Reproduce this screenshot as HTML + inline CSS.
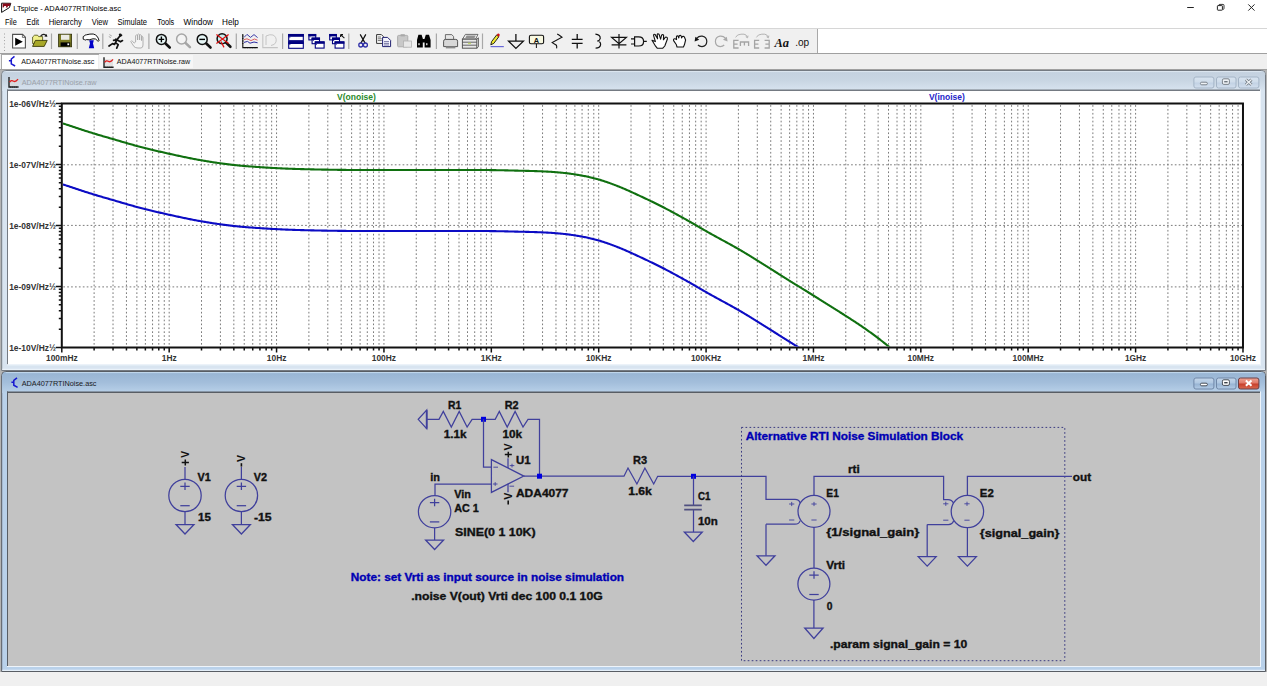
<!DOCTYPE html>
<html><head><meta charset="utf-8"><style>
html,body{margin:0;padding:0;background:#fff;overflow:hidden;width:1267px;height:686px;}
svg{display:block;font-family:"Liberation Sans", sans-serif;}
</style></head><body>
<svg width="1267" height="686" viewBox="0 0 1267 686">
<rect x="0" y="0" width="1267" height="28" fill="#ffffff" />
<rect x="0" y="28" width="1267" height="1" fill="#d6d6d6" />
<rect x="0" y="29" width="818" height="24" fill="#f0f0f0" />
<rect x="818" y="29" width="449" height="24" fill="#ffffff" />
<rect x="817" y="29" width="1" height="24" fill="#a8a8a8" />
<rect x="0" y="53" width="1267" height="1" fill="#a0a0a0" />
<rect x="0" y="54" width="1267" height="15" fill="#efefef" />
<rect x="0" y="69" width="1267" height="1" fill="#a0a0a0" />
<rect x="0" y="70" width="1267" height="602" fill="#b4b4b4" />
<rect x="0" y="672" width="1267" height="14" fill="#f0f0f0" />
<text x="13.3" y="11.4" font-size="7.6" font-weight="normal" fill="#000" text-anchor="start" textLength="107.7" lengthAdjust="spacingAndGlyphs" >LTspice - ADA4077RTINoise.asc</text>
<text x="5" y="24.6" font-size="8.4" font-weight="normal" fill="#000" text-anchor="start" textLength="11.8" lengthAdjust="spacingAndGlyphs" >File</text>
<text x="26.6" y="24.6" font-size="8.4" font-weight="normal" fill="#000" text-anchor="start" textLength="12.4" lengthAdjust="spacingAndGlyphs" >Edit</text>
<text x="48.7" y="24.6" font-size="8.4" font-weight="normal" fill="#000" text-anchor="start" textLength="33.2" lengthAdjust="spacingAndGlyphs" >Hierarchy</text>
<text x="91.8" y="24.6" font-size="8.4" font-weight="normal" fill="#000" text-anchor="start" textLength="16.2" lengthAdjust="spacingAndGlyphs" >View</text>
<text x="117.4" y="24.6" font-size="8.4" font-weight="normal" fill="#000" text-anchor="start" textLength="29.6" lengthAdjust="spacingAndGlyphs" >Simulate</text>
<text x="157.3" y="24.6" font-size="8.4" font-weight="normal" fill="#000" text-anchor="start" textLength="16.9" lengthAdjust="spacingAndGlyphs" >Tools</text>
<text x="183.5" y="24.6" font-size="8.4" font-weight="normal" fill="#000" text-anchor="start" textLength="29.5" lengthAdjust="spacingAndGlyphs" >Window</text>
<text x="222" y="24.6" font-size="8.4" font-weight="normal" fill="#000" text-anchor="start" textLength="16.8" lengthAdjust="spacingAndGlyphs" >Help</text>
<line x1="1187.2" y1="7.5" x2="1193.8" y2="7.5" stroke="#222" stroke-width="1" />
<rect x="1217.4" y="5.6" width="5" height="4.6" rx="0.6" fill="none" stroke="#222" stroke-width="1"/>
<path d="M1218.6 5.4 Q1218.8 4.4 1219.8 4.4 H1223 Q1224 4.4 1224 5.4 V8.4 Q1224 9.4 1222.8 9.6" fill="none" stroke="#222" stroke-width="0.9"/>
<path d="M1248.3 4.4 L1254.5 10.6 M1254.5 4.4 L1248.3 10.6" stroke="#222" stroke-width="1"/>
<line x1="4.5" y1="33.5" x2="4.5" y2="51" stroke="#a0a0a0" stroke-width="1" stroke-dasharray="1 2.3"/>
<line x1="51.5" y1="33.5" x2="51.5" y2="49" stroke="#a8a8a8" stroke-width="1.2"/>
<line x1="77.3" y1="33.5" x2="77.3" y2="49" stroke="#a8a8a8" stroke-width="1.2"/>
<line x1="102.8" y1="33.5" x2="102.8" y2="49" stroke="#a8a8a8" stroke-width="1.2"/>
<line x1="148.9" y1="33.5" x2="148.9" y2="49" stroke="#a8a8a8" stroke-width="1.2"/>
<line x1="236.3" y1="33.5" x2="236.3" y2="49" stroke="#a8a8a8" stroke-width="1.2"/>
<line x1="282.6" y1="33.5" x2="282.6" y2="49" stroke="#a8a8a8" stroke-width="1.2"/>
<line x1="348.8" y1="33.5" x2="348.8" y2="49" stroke="#a8a8a8" stroke-width="1.2"/>
<line x1="436.4" y1="33.5" x2="436.4" y2="49" stroke="#a8a8a8" stroke-width="1.2"/>
<line x1="482.5" y1="33.5" x2="482.5" y2="49" stroke="#a8a8a8" stroke-width="1.2"/>
<path d="M12.6 34.4 H22.6 L25.4 37.2 V48 H12.6 Z" fill="#fff" stroke="#505050" stroke-width="1.1"/>
<path d="M22.4 34.4 V37.4 H25.4" fill="none" stroke="#505050" stroke-width="0.8"/>
<path d="M15.2 37.8 L22.8 41.8 L15.2 45.8 Z" fill="#000"/>
<path d="M32.6 37 L34.6 35.2 H37.6 L38.6 36.6 H42.6 V43.5 H32.6 Z" fill="#f0f08a" stroke="#4a4a10" stroke-width="0.8"/>
<path d="M32.6 46.4 L35.4 40.4 H47.2 L44.2 46.4 Z" fill="#a8a828" stroke="#3a3a08" stroke-width="0.9"/>
<path d="M40.6 36.2 Q43.5 32.8 46.2 35.6" fill="none" stroke="#222" stroke-width="1.1"/>
<path d="M44.4 36.6 L47.4 36.8 L46.6 33.9 Z" fill="#111"/>
<rect x="58.6" y="34.2" width="13" height="12.6" fill="#7a7a22" stroke="#2f2f08" stroke-width="0.8"/>
<rect x="61" y="34.8" width="8.4" height="5" fill="#ecece4"/>
<rect x="60.6" y="42.4" width="9.6" height="4" fill="#000"/>
<rect x="67.4" y="43.4" width="1.8" height="1.8" fill="#fff"/>
<path d="M83.2 36.6 L84.6 35.8 Q85 34.6 86.4 34.8 Q90 33.8 93.2 34 Q97.8 35 99 40.6 Q98.6 41.8 97.6 40.8 Q95.8 38.2 93 38.8 L89.2 39.8 L86.4 39.6 Q85 40.6 84.4 39.6 L83.2 39.2 Z" fill="#fff" stroke="#111" stroke-width="1"/>
<path d="M89.2 40.2 H93.8 L93 43.4 L94.2 48.2 H88.8 L90 43.4 Z" fill="#0000c8"/>
<path d="M109 46 L112.5 43.6 L114.6 44.4 L117 39.6 L113.6 40.4 M117 39.6 L119.5 36.5 L121.5 35.3 M117 39.6 L115.4 42.6 L118.2 44.6 L116.7 48.2 M115.8 39.2 L120.5 41.8 L122.5 40.6" fill="none" stroke="#111" stroke-width="1.7" stroke-linecap="round" stroke-linejoin="round"/>
<circle cx="120.2" cy="34.8" r="1.4" fill="#111"/>
<path d="M109.4 34.6 L111.8 36 M108.8 36.6 L111 37.6" stroke="#777" stroke-width="0.6"/>
<path d="M132.6 41.5 Q131.5 40 130.8 41.6 L134 46.6 Q135.5 48 138 48 H141 Q143 47.8 143 45 V37.6 Q142.8 36.2 141.8 36.6 L141.6 40.6 V35.6 Q140.6 34 139.6 35.4 V40 V34.6 Q138.6 33.4 137.6 34.6 V40 V35.4 Q136.6 34.4 135.6 35.6 V42 L134.2 43 Z" fill="#f4f4f4" stroke="#a8a8a8" stroke-width="0.9"/>
<line x1="165.0" y1="43.0" x2="169.70000000000002" y2="47.5" stroke="#111" stroke-width="2.6" stroke-linecap="round"/>
<circle cx="161.4" cy="39.4" r="5" fill="#e6f6f6" stroke="#111" stroke-width="1.5"/>
<path d="M158.6 39.4 H164.2 M161.4 36.6 V42.2" stroke="#000" stroke-width="1.4"/>
<line x1="185.2" y1="42.6" x2="189.9" y2="47.1" stroke="#a6a6a6" stroke-width="2.6" stroke-linecap="round"/>
<circle cx="181.6" cy="39" r="5" fill="#f4f4f4" stroke="#a6a6a6" stroke-width="1.5"/>
<line x1="205.79999999999998" y1="43.0" x2="210.5" y2="47.5" stroke="#111" stroke-width="2.6" stroke-linecap="round"/>
<circle cx="202.2" cy="39.4" r="5" fill="#e6f6f6" stroke="#111" stroke-width="1.5"/>
<path d="M199.4 39.4 H205" stroke="#000" stroke-width="1.4"/>
<line x1="225.7" y1="42.300000000000004" x2="230.4" y2="46.800000000000004" stroke="#111" stroke-width="2.6" stroke-linecap="round"/>
<circle cx="222.1" cy="38.7" r="5" fill="#c8f0f0" stroke="#111" stroke-width="1.5"/>
<path d="M216.4 34.4 L228.6 43.6 M216.4 43.6 L228.6 34.4 M221 41.6 L224 47.4" stroke="#e01010" stroke-width="1.2"/>
<path d="M242.8 34 V47.6 H257.8" fill="none" stroke="#111" stroke-width="1.1"/>
<path d="M242.2 36 H243.4 M242.2 38.5 H243.4 M242.2 41 H243.4 M242.2 43.5 H243.4 M245 47 V48.2 M247.5 47 V48.2 M250 47 V48.2 M252.5 47 V48.2 M255 47 V48.2" stroke="#111" stroke-width="0.9"/>
<path d="M244 37.4 L247 34.4 L250.5 37.4 L254 34.6 L257.6 37.6" fill="none" stroke="#2a2aa0" stroke-width="0.9"/>
<path d="M244 39.6 L247 38.8 L251 40.6 L254.5 39 L257.5 40.2" fill="none" stroke="#e06060" stroke-width="1"/>
<path d="M244 42.4 L247.5 41.4 L250 43.2 L254 42 L257.6 42.8" fill="none" stroke="#2a2aa0" stroke-width="1"/>
<path d="M262.8 34 V47.6 H277.8" fill="none" stroke="#c4c4c4" stroke-width="1.1"/>
<path d="M266 36 Q270 34 273 35 Q277 37 276 42 Q275 45 271 45.5 M266 36 V45" fill="none" stroke="#c0c0c0" stroke-width="0.9"/>
<rect x="288.7" y="34.5" width="14.6" height="6.2" fill="#fff" stroke="#000080" stroke-width="1.1"/>
<rect x="288.2" y="34" width="15.6" height="2.8" fill="#000080"/>
<rect x="289.4" y="36.8" width="0.9" height="0.9" fill="#000080"/>
<rect x="288.7" y="41.7" width="14.6" height="6.6" fill="#fff" stroke="#000080" stroke-width="1.1"/>
<rect x="288.2" y="41.2" width="15.6" height="2.8" fill="#000080"/>
<rect x="289.4" y="44.0" width="0.9" height="0.9" fill="#000080"/>
<rect x="308.9" y="34.5" width="6.8" height="5.4" fill="#fff" stroke="#000080" stroke-width="1.1"/>
<rect x="308.4" y="34" width="7.8" height="2.4" fill="#000080"/>
<rect x="309.59999999999997" y="36.4" width="0.9" height="0.9" fill="#000080"/>
<rect x="312.1" y="38.1" width="7.4" height="5.6" fill="#fff" stroke="#000080" stroke-width="1.1"/>
<rect x="311.6" y="37.6" width="8.4" height="2.4" fill="#000080"/>
<rect x="312.8" y="40.0" width="0.9" height="0.9" fill="#000080"/>
<rect x="315.3" y="41.9" width="8.8" height="6.2" fill="#fff" stroke="#000080" stroke-width="1.1"/>
<rect x="314.8" y="41.4" width="9.8" height="2.4" fill="#000080"/>
<rect x="316.0" y="43.8" width="0.9" height="0.9" fill="#000080"/>
<rect x="329.7" y="34.5" width="6.6" height="5.4" fill="#fff" stroke="#000080" stroke-width="1.1"/>
<rect x="329.2" y="34" width="7.6" height="2.4" fill="#000080"/>
<rect x="330.4" y="36.4" width="0.9" height="0.9" fill="#000080"/>
<rect x="332.5" y="38.1" width="7" height="5.6" fill="#fff" stroke="#000080" stroke-width="1.1"/>
<rect x="332" y="37.6" width="8" height="2.4" fill="#000080"/>
<rect x="333.2" y="40.0" width="0.9" height="0.9" fill="#000080"/>
<rect x="335.1" y="41.9" width="8.8" height="6.2" fill="#fff" stroke="#000080" stroke-width="1.1"/>
<rect x="334.6" y="41.4" width="9.8" height="2.4" fill="#000080"/>
<rect x="335.8" y="43.8" width="0.9" height="0.9" fill="#000080"/>
<path d="M340.6 34.6 L344.4 38.2 M340.6 34.6 V37 M340.6 34.6 H343" stroke="#111" stroke-width="1.1" fill="none"/>
<path d="M360.2 34.4 L365.2 43.4 M365.8 34.4 L360.8 43.4" stroke="#111" stroke-width="1.2"/>
<circle cx="360.8" cy="45" r="2" fill="none" stroke="#3030a8" stroke-width="1.3"/>
<circle cx="365.4" cy="45" r="2" fill="none" stroke="#3030a8" stroke-width="1.3"/>
<path d="M376.6 34.6 H381.4 L383.4 36.6 V43.4 H376.6 Z" fill="#fff" stroke="#333" stroke-width="1"/>
<path d="M377.8 37 H381 M377.8 38.8 H381.8 M377.8 40.6 H381.8" stroke="#333" stroke-width="0.7"/>
<path d="M382.6 37.4 H387.6 L390.6 40.4 V46.6 H382.6 Z" fill="#f4f4ff" stroke="#222270" stroke-width="1"/>
<path d="M384 41.6 H389 M384 43.4 H389 M384 45 H389" stroke="#444480" stroke-width="0.7"/>
<rect x="397.6" y="35.4" width="10.2" height="11.4" rx="1" fill="#c8c8c8" stroke="#a8a8a8" stroke-width="0.9"/>
<rect x="400.6" y="34.2" width="4.2" height="2.2" fill="#a8a8a8"/>
<rect x="403.4" y="41" width="8" height="6.2" fill="#e8e8e8" stroke="#b0b0b0" stroke-width="0.8"/>
<path d="M418.4 34.8 H421.6 L422.8 38.6 V47.6 H417 V40 Z M424.6 38.6 L425.8 34.8 H429 L430.6 40 V47.6 H424.6 Z M422.8 39 H424.6 V42.5 H422.8 Z" fill="#000"/>
<rect x="418.4" y="43.2" width="1.2" height="2" fill="#fff"/><rect x="426.2" y="43.2" width="1.2" height="2" fill="#fff"/>
<path d="M445.4 34.6 H451.8 L453.6 36.6 V39.6 H445.4 Z" fill="#e6e6e6" stroke="#606060" stroke-width="0.9"/>
<path d="M443.6 41.2 Q443.6 39.4 445.4 39.4 H455.8 Q457.6 39.4 457.6 41.2 V46.6 H443.6 Z" fill="#d8d8d8" stroke="#555" stroke-width="1"/>
<rect x="445.8" y="46.4" width="9.6" height="2" fill="#8a8a8a"/>
<path d="M465.4 34.4 H478 L475.6 39 H462.6 Z" fill="#f0f0f0" stroke="#606060" stroke-width="0.9"/>
<path d="M466.6 35.6 H475.8 L474.4 38.2 H465.2 Z" fill="#909090"/>
<rect x="462.4" y="39.2" width="14.4" height="9" fill="#e8e8e8" stroke="#555" stroke-width="1"/>
<path d="M462.4 42.2 H476.8 M462.4 45.2 H476.8 M476.8 39.2 L478.4 37.8 V46.8 L476.8 48.2" fill="none" stroke="#555" stroke-width="0.9"/>
<rect x="468" y="42.8" width="3" height="1.2" fill="#c8e070"/>
<path d="M490.8 44.8 L491.6 41.6 L496.6 35 L498.8 36.8 L493.8 43.4 Z" fill="#f0e830" stroke="#111" stroke-width="0.9"/>
<path d="M496.6 35 L497.6 33.8 Q498.8 33.2 499.6 34.2 Q500 35.2 499.2 36.2 L498.8 36.8 Z" fill="#d01010"/>
<path d="M490.6 46.6 H503.8" stroke="#6868d8" stroke-width="1.2"/>
<path d="M515.9 34 V41.1 M508.6 41.1 H523.4 L515.9 48.4 Z" fill="none" stroke="#111" stroke-width="1.3" stroke-linejoin="miter"/>
<rect x="529.4" y="35.2" width="14.2" height="8.6" rx="1.6" fill="#f8f8e0" stroke="#111" stroke-width="1.1"/>
<text x="536.5" y="42.6" font-size="7.4" font-weight="bold" fill="#111" text-anchor="middle">A</text>
<path d="M536.4 43.8 V48" stroke="#111" stroke-width="1"/>
<path d="M557.2 34 Q558.4 34.6 562 37.2 L552.2 42.6 L556.4 45.2 Q557 46.4 556.6 48.4" fill="none" stroke="#111" stroke-width="1.1"/>
<path d="M577.2 34 V39.4 M571.8 39.4 H582.6 M571.8 43.4 H582.6 M577.2 43.4 V48.4" stroke="#111" stroke-width="1.3"/>
<path d="M595.4 34.2 Q600.6 34.6 600.2 38.6 Q599.6 40.8 597.2 41 Q600.8 41.4 600.6 44.6 Q600.2 48.2 595.6 48.2" fill="none" stroke="#111" stroke-width="1.2"/>
<path d="M619 34 V48.4 M611.6 37.4 H626.4 L619 43.8 Z M611.6 44.8 H626.4" fill="none" stroke="#111" stroke-width="1.2"/>
<path d="M634.6 36.8 H638.6 Q643.6 36.8 643.6 41.4 Q643.6 46 638.6 46 H634.6 Z M631 38.8 H634.6 M631 44 H634.6 M643.6 41.4 H646.8" fill="none" stroke="#111" stroke-width="1.2"/>
<path d="M652 40.2 L655.4 41.6 L653.6 35.6 Q653.4 33.8 655 34.4 L657.6 38.8 L657.2 34.6 Q657.6 33.4 659 34.2 L660.6 39.2 L661.6 35.2 Q662.6 34 663.6 35.2 L663.4 39.8 L665.4 37.2 Q667.6 36.8 667.4 39 L664.8 46 L662.8 48.2 H657.2 L655.6 46.2 Z" fill="#fff" stroke="#111" stroke-width="1.1" stroke-linejoin="round"/>
<path d="M673.6 40.6 Q673.2 38.6 675 38.8 L676.6 39.6 L676.4 37 Q676.6 35.6 678 36 L678.8 38 L679.2 35.8 Q680.4 35 681.2 36 L681.6 38 L682.4 36.6 Q683.6 36 684.4 37 L685.6 40 L684.4 44.8 L683.4 47 H677 L676.4 44.8 Z" fill="#fff" stroke="#111" stroke-width="1.1" stroke-linejoin="round"/>
<path d="M696.6 38.4 Q699 35.8 702.2 36.2 Q706.8 37 706.8 41.6 Q706.6 46.4 702 46.6 Q699.4 46.6 698 45" fill="none" stroke="#222" stroke-width="1.2"/>
<path d="M694.6 41.6 L695.4 36.8 L699.2 39.8 Z" fill="#111"/>
<path d="M725.6 38.4 Q723.2 35.8 720 36.2 Q715.4 37 715.4 41.6 Q715.6 46.4 720.2 46.6 Q722.8 46.6 724.2 45" fill="none" stroke="#a8a8a8" stroke-width="1.2"/>
<path d="M727.6 41.6 L726.8 36.8 L723 39.8 Z" fill="#a8a8a8"/>
<path d="M738.6 40.4 H733.8 V48 H738.6 M733.8 44.2 H737.6" fill="none" stroke="#a4a4a4" stroke-width="1.3"/>
<path d="M740.4 46 V42 H748.6 V46 M744.4 42 V45.4" fill="none" stroke="#a4a4a4" stroke-width="1.3"/>
<path d="M735.6 37.4 Q737 34.2 741 34.2 H744 Q746.4 34.4 747.2 37" fill="none" stroke="#a4a4a4" stroke-width="0.8"/>
<path d="M745.8 36.8 L747.6 37.8 L748 35.6" fill="none" stroke="#a4a4a4" stroke-width="0.8"/>
<path d="M759.2 40.4 H754.6 V48 H759.2 M754.6 44.2 H758.4" fill="none" stroke="#a4a4a4" stroke-width="1.3"/>
<path d="M764.6 40.4 H769.2 V48 H764.6 M769.2 44.2 H765.4" fill="none" stroke="#a4a4a4" stroke-width="1.3"/>
<path d="M756.4 37.4 Q757.8 34.2 761.8 34.2 H764.8 Q767.2 34.4 768 37" fill="none" stroke="#a4a4a4" stroke-width="0.8"/>
<path d="M766.6 36.8 L768.4 37.8 L768.8 35.6" fill="none" stroke="#a4a4a4" stroke-width="0.8"/>
<text x="774.4" y="46.8" font-family="Liberation Serif, serif" font-size="12.4" font-weight="bold" font-style="italic" fill="#111" textLength="14.6" lengthAdjust="spacingAndGlyphs">Aa</text>
<text x="795.2" y="45.6" font-family="Liberation Sans, sans-serif" font-size="11" fill="#111" textLength="14" lengthAdjust="spacingAndGlyphs">.op</text>
<path d="M1.6 3.2 V12.4 L9.4 7.6 L10.8 3.3 Z" fill="#fff" stroke="#111" stroke-width="1"/>
<path d="M2.6 3.6 H10.6 L9.8 6 H8 L7.4 7.4 H5.8 L6.2 6 H4.4 L3.6 7.4 H2.6 Z" fill="#8a0a1a"/>
<rect x="2" y="55" width="96" height="14" fill="#ffffff" />
<rect x="1" y="54" width="98" height="15" fill="#a8a8a8" />
<rect x="2" y="55" width="96.8" height="14" fill="#ffffff" />
<rect x="99.1" y="55" width="94" height="13" fill="#f6f6f6" />
<path d="M14.5 56.400000000000006 L11.3 59.0 V63.800000000000004 L15.100000000000001 66.0 M8.9 60.800000000000004 H11.3" fill="none" stroke="#1818d0" stroke-width="1.5"/>
<rect x="104" y="59.2" width="9" height="7" fill="#d8d8d8" opacity="0.7"/>
<path d="M104 57.2 V67.2 H113.6" fill="none" stroke="#222" stroke-width="1.4"/>
<path d="M105.4 67.8 V66.8 M107.4 67.8 V66.8 M109.4 67.8 V66.8 M111.4 67.8 V66.8" stroke="#222" stroke-width="1"/>
<path d="M104.6 62.400000000000006 Q106.5 59.800000000000004 108.5 61.400000000000006 Q110.6 62.6 113 59.400000000000006" fill="none" stroke="#e02020" stroke-width="1.3"/>
<text x="21.3" y="63.9" font-size="7.9" font-weight="normal" fill="#111" text-anchor="start" textLength="73.1" lengthAdjust="spacingAndGlyphs" >ADA4077RTINoise.asc</text>
<text x="116.8" y="63.9" font-size="7.9" font-weight="normal" fill="#111" text-anchor="start" textLength="73.4" lengthAdjust="spacingAndGlyphs" >ADA4077RTINoise.raw</text>
<defs><linearGradient id="g70" x1="0" y1="0" x2="0" y2="1"><stop offset="0" stop-color="#c4d1df"/><stop offset="0.5" stop-color="#c9d6e3"/><stop offset="1" stop-color="#d8e4f0"/></linearGradient></defs>
<path d="M1.7 370.5 V74.5 Q1.7 70.5 5.7 70.5 H1261.5 Q1265.5 70.5 1265.5 74.5 V370.5 Z" fill="#d8e4f0" stroke="#747a82" stroke-width="1"/>
<path d="M2.2 91 V74.5 Q2.2 71 5.7 71 H1261.5 Q1265 71 1265 74.5 V91 Z" fill="url(#g70)"/>
<path d="M5.7 71.6 H1261.5" stroke="#dde7f1" stroke-width="1"/>
<rect x="2.2" y="368.8" width="1262.8" height="1" fill="#eef6fc" />
<rect x="7" y="90" width="1253" height="274.4" fill="#ffffff" />
<rect x="7" y="89.5" width="1253" height="1.5" fill="#747a82" />
<rect x="7" y="89.5" width="1" height="274.9" fill="#747a82" />
<rect x="7" y="364.4" width="1254" height="1" fill="#eef4fa" />
<rect x="1260" y="89.5" width="1" height="275.9" fill="#eef4fa" />
<text x="21.7" y="85.4" font-size="7.9" font-weight="normal" fill="#9aa0a8" text-anchor="start" textLength="74.8" lengthAdjust="spacingAndGlyphs" >ADA4077RTINoise.raw</text>
<rect x="9" y="79" width="9" height="7" fill="#d8d8d8" opacity="0.7"/>
<path d="M9 77 V87 H18.6" fill="none" stroke="#222" stroke-width="1.4"/>
<path d="M10.4 87.6 V86.6 M12.4 87.6 V86.6 M14.4 87.6 V86.6 M16.4 87.6 V86.6" stroke="#222" stroke-width="1"/>
<path d="M9.6 82.2 Q11.5 79.6 13.5 81.2 Q15.6 82.4 18 79.2" fill="none" stroke="#e02020" stroke-width="1.3"/>
<defs><linearGradient id="b700" x1="0" y1="0" x2="0" y2="1"><stop offset="0" stop-color="#d8e4f0"/><stop offset="0.45" stop-color="#cfdcea"/><stop offset="0.55" stop-color="#c2d2e4"/><stop offset="1" stop-color="#d4e0ee"/></linearGradient></defs>
<rect x="1193.9" y="77.0" width="20.0" height="11.0" rx="2" fill="url(#b700)" stroke="#a4b4c6" stroke-width="1"/>
<defs><linearGradient id="b701" x1="0" y1="0" x2="0" y2="1"><stop offset="0" stop-color="#d8e4f0"/><stop offset="0.45" stop-color="#cfdcea"/><stop offset="0.55" stop-color="#c2d2e4"/><stop offset="1" stop-color="#d4e0ee"/></linearGradient></defs>
<rect x="1216.5" y="77.0" width="19.5" height="11.0" rx="2" fill="url(#b701)" stroke="#a4b4c6" stroke-width="1"/>
<defs><linearGradient id="b702" x1="0" y1="0" x2="0" y2="1"><stop offset="0" stop-color="#d8e4f0"/><stop offset="0.45" stop-color="#cfdcea"/><stop offset="0.55" stop-color="#c2d2e4"/><stop offset="1" stop-color="#d4e0ee"/></linearGradient></defs>
<rect x="1238.5" y="77.0" width="20.40000000000009" height="11.0" rx="2" fill="url(#b702)" stroke="#a4b4c6" stroke-width="1"/>
<rect x="1200.4" y="82.2" width="7" height="2.6" rx="1.3" fill="#eef2f6" stroke="#707880" stroke-width="0.9"/>
<rect x="1222.4" y="78.8" width="7" height="5.6" rx="1.4" fill="#eef2f6" stroke="#707880" stroke-width="0.9"/>
<rect x="1224.2" y="81" width="3.4" height="1.4" fill="#707880"/>
<path d="M1245.9 79.60000000000001 L1251.5 84.8 M1251.5 79.60000000000001 L1245.9 84.8" stroke="#707880" stroke-width="2.8"/>
<path d="M1245.9 79.60000000000001 L1251.5 84.8 M1251.5 79.60000000000001 L1245.9 84.8" stroke="#eef2f6" stroke-width="1.3"/>
<defs><linearGradient id="g371" x1="0" y1="0" x2="0" y2="1"><stop offset="0" stop-color="#97b4d3"/><stop offset="0.5" stop-color="#a3bedb"/><stop offset="1" stop-color="#b9d1e9"/></linearGradient></defs>
<path d="M1.7 671.5 V375.5 Q1.7 371.5 5.7 371.5 H1261.5 Q1265.5 371.5 1265.5 375.5 V671.5 Z" fill="#b9d1ea" stroke="#585d64" stroke-width="1"/>
<path d="M2.2 393 V375.5 Q2.2 372 5.7 372 H1261.5 Q1265 372 1265 375.5 V393 Z" fill="url(#g371)"/>
<path d="M5.7 372.6 H1261.5" stroke="#c4daee" stroke-width="1"/>
<rect x="2.2" y="669.8" width="1262.8" height="1" fill="#eef6fc" />
<rect x="7" y="392" width="1253" height="274" fill="#c3c3c3" />
<rect x="7" y="391.5" width="1253" height="1.5" fill="#585d64" />
<rect x="7" y="391.5" width="1" height="274.5" fill="#585d64" />
<rect x="7" y="666" width="1254" height="1" fill="#eef4fa" />
<rect x="1260" y="391.5" width="1" height="275.5" fill="#eef4fa" />
<text x="21.7" y="386.4" font-size="7.9" font-weight="normal" fill="#1a1a1a" text-anchor="start" textLength="74.8" lengthAdjust="spacingAndGlyphs" >ADA4077RTINoise.asc</text>
<path d="M17.0 377.8 L13.8 380.40000000000003 V385.20000000000005 L17.6 387.40000000000003 M11.4 382.20000000000005 H13.8" fill="none" stroke="#1818d0" stroke-width="1.5"/>
<defs><linearGradient id="b3710" x1="0" y1="0" x2="0" y2="1"><stop offset="0" stop-color="#c4d6ea"/><stop offset="0.45" stop-color="#b0c8e2"/><stop offset="0.55" stop-color="#98b4d4"/><stop offset="1" stop-color="#b4cce6"/></linearGradient></defs>
<rect x="1193.9" y="378.0" width="20.0" height="11.0" rx="2" fill="url(#b3710)" stroke="#7088a8" stroke-width="1"/>
<defs><linearGradient id="b3711" x1="0" y1="0" x2="0" y2="1"><stop offset="0" stop-color="#c4d6ea"/><stop offset="0.45" stop-color="#b0c8e2"/><stop offset="0.55" stop-color="#98b4d4"/><stop offset="1" stop-color="#b4cce6"/></linearGradient></defs>
<rect x="1216.5" y="378.0" width="19.5" height="11.0" rx="2" fill="url(#b3711)" stroke="#7088a8" stroke-width="1"/>
<defs><linearGradient id="b3712" x1="0" y1="0" x2="0" y2="1"><stop offset="0" stop-color="#eea494"/><stop offset="0.45" stop-color="#e07868"/><stop offset="0.55" stop-color="#c8402c"/><stop offset="1" stop-color="#d86850"/></linearGradient></defs>
<rect x="1238.5" y="378.0" width="20.40000000000009" height="11.0" rx="2" fill="url(#b3712)" stroke="#6a4048" stroke-width="1"/>
<rect x="1200.4" y="383.2" width="7" height="2.6" rx="1.3" fill="#fff" stroke="#3a4048" stroke-width="0.9"/>
<rect x="1222.4" y="379.8" width="7" height="5.6" rx="1.4" fill="#fff" stroke="#3a4048" stroke-width="0.9"/>
<rect x="1224.2" y="382" width="3.4" height="1.4" fill="#3a4048"/>
<path d="M1245.9 380.59999999999997 L1251.5 385.8 M1251.5 380.59999999999997 L1245.9 385.8" stroke="#fff" stroke-width="2"/>
<line x1="94.12" y1="105.1" x2="94.12" y2="346.5" stroke="#7a7a7a" stroke-width="1" stroke-dasharray="1.7 2.2"/>
<line x1="113.03" y1="105.1" x2="113.03" y2="346.5" stroke="#7a7a7a" stroke-width="1" stroke-dasharray="1.7 2.2"/>
<line x1="126.45" y1="105.1" x2="126.45" y2="346.5" stroke="#7a7a7a" stroke-width="1" stroke-dasharray="1.7 2.2"/>
<line x1="136.86" y1="105.1" x2="136.86" y2="346.5" stroke="#7a7a7a" stroke-width="1" stroke-dasharray="1.7 2.2"/>
<line x1="145.36" y1="105.1" x2="145.36" y2="346.5" stroke="#7a7a7a" stroke-width="1" stroke-dasharray="1.7 2.2"/>
<line x1="152.55" y1="105.1" x2="152.55" y2="346.5" stroke="#7a7a7a" stroke-width="1" stroke-dasharray="1.7 2.2"/>
<line x1="158.77" y1="105.1" x2="158.77" y2="346.5" stroke="#7a7a7a" stroke-width="1" stroke-dasharray="1.7 2.2"/>
<line x1="164.27" y1="105.1" x2="164.27" y2="346.5" stroke="#7a7a7a" stroke-width="1" stroke-dasharray="1.7 2.2"/>
<line x1="169.18" y1="105.1" x2="169.18" y2="346.5" stroke="#7a7a7a" stroke-width="1" stroke-dasharray="1.7 2.2"/>
<line x1="201.50" y1="105.1" x2="201.50" y2="346.5" stroke="#7a7a7a" stroke-width="1" stroke-dasharray="1.7 2.2"/>
<line x1="220.41" y1="105.1" x2="220.41" y2="346.5" stroke="#7a7a7a" stroke-width="1" stroke-dasharray="1.7 2.2"/>
<line x1="233.83" y1="105.1" x2="233.83" y2="346.5" stroke="#7a7a7a" stroke-width="1" stroke-dasharray="1.7 2.2"/>
<line x1="244.24" y1="105.1" x2="244.24" y2="346.5" stroke="#7a7a7a" stroke-width="1" stroke-dasharray="1.7 2.2"/>
<line x1="252.74" y1="105.1" x2="252.74" y2="346.5" stroke="#7a7a7a" stroke-width="1" stroke-dasharray="1.7 2.2"/>
<line x1="259.93" y1="105.1" x2="259.93" y2="346.5" stroke="#7a7a7a" stroke-width="1" stroke-dasharray="1.7 2.2"/>
<line x1="266.15" y1="105.1" x2="266.15" y2="346.5" stroke="#7a7a7a" stroke-width="1" stroke-dasharray="1.7 2.2"/>
<line x1="271.65" y1="105.1" x2="271.65" y2="346.5" stroke="#7a7a7a" stroke-width="1" stroke-dasharray="1.7 2.2"/>
<line x1="276.56" y1="105.1" x2="276.56" y2="346.5" stroke="#7a7a7a" stroke-width="1" stroke-dasharray="1.7 2.2"/>
<line x1="308.88" y1="105.1" x2="308.88" y2="346.5" stroke="#7a7a7a" stroke-width="1" stroke-dasharray="1.7 2.2"/>
<line x1="327.79" y1="105.1" x2="327.79" y2="346.5" stroke="#7a7a7a" stroke-width="1" stroke-dasharray="1.7 2.2"/>
<line x1="341.21" y1="105.1" x2="341.21" y2="346.5" stroke="#7a7a7a" stroke-width="1" stroke-dasharray="1.7 2.2"/>
<line x1="351.62" y1="105.1" x2="351.62" y2="346.5" stroke="#7a7a7a" stroke-width="1" stroke-dasharray="1.7 2.2"/>
<line x1="360.12" y1="105.1" x2="360.12" y2="346.5" stroke="#7a7a7a" stroke-width="1" stroke-dasharray="1.7 2.2"/>
<line x1="367.31" y1="105.1" x2="367.31" y2="346.5" stroke="#7a7a7a" stroke-width="1" stroke-dasharray="1.7 2.2"/>
<line x1="373.53" y1="105.1" x2="373.53" y2="346.5" stroke="#7a7a7a" stroke-width="1" stroke-dasharray="1.7 2.2"/>
<line x1="379.03" y1="105.1" x2="379.03" y2="346.5" stroke="#7a7a7a" stroke-width="1" stroke-dasharray="1.7 2.2"/>
<line x1="383.94" y1="105.1" x2="383.94" y2="346.5" stroke="#7a7a7a" stroke-width="1" stroke-dasharray="1.7 2.2"/>
<line x1="416.26" y1="105.1" x2="416.26" y2="346.5" stroke="#7a7a7a" stroke-width="1" stroke-dasharray="1.7 2.2"/>
<line x1="435.17" y1="105.1" x2="435.17" y2="346.5" stroke="#7a7a7a" stroke-width="1" stroke-dasharray="1.7 2.2"/>
<line x1="448.59" y1="105.1" x2="448.59" y2="346.5" stroke="#7a7a7a" stroke-width="1" stroke-dasharray="1.7 2.2"/>
<line x1="459.00" y1="105.1" x2="459.00" y2="346.5" stroke="#7a7a7a" stroke-width="1" stroke-dasharray="1.7 2.2"/>
<line x1="467.50" y1="105.1" x2="467.50" y2="346.5" stroke="#7a7a7a" stroke-width="1" stroke-dasharray="1.7 2.2"/>
<line x1="474.69" y1="105.1" x2="474.69" y2="346.5" stroke="#7a7a7a" stroke-width="1" stroke-dasharray="1.7 2.2"/>
<line x1="480.91" y1="105.1" x2="480.91" y2="346.5" stroke="#7a7a7a" stroke-width="1" stroke-dasharray="1.7 2.2"/>
<line x1="486.41" y1="105.1" x2="486.41" y2="346.5" stroke="#7a7a7a" stroke-width="1" stroke-dasharray="1.7 2.2"/>
<line x1="491.32" y1="105.1" x2="491.32" y2="346.5" stroke="#7a7a7a" stroke-width="1" stroke-dasharray="1.7 2.2"/>
<line x1="523.64" y1="105.1" x2="523.64" y2="346.5" stroke="#7a7a7a" stroke-width="1" stroke-dasharray="1.7 2.2"/>
<line x1="542.55" y1="105.1" x2="542.55" y2="346.5" stroke="#7a7a7a" stroke-width="1" stroke-dasharray="1.7 2.2"/>
<line x1="555.97" y1="105.1" x2="555.97" y2="346.5" stroke="#7a7a7a" stroke-width="1" stroke-dasharray="1.7 2.2"/>
<line x1="566.38" y1="105.1" x2="566.38" y2="346.5" stroke="#7a7a7a" stroke-width="1" stroke-dasharray="1.7 2.2"/>
<line x1="574.88" y1="105.1" x2="574.88" y2="346.5" stroke="#7a7a7a" stroke-width="1" stroke-dasharray="1.7 2.2"/>
<line x1="582.07" y1="105.1" x2="582.07" y2="346.5" stroke="#7a7a7a" stroke-width="1" stroke-dasharray="1.7 2.2"/>
<line x1="588.29" y1="105.1" x2="588.29" y2="346.5" stroke="#7a7a7a" stroke-width="1" stroke-dasharray="1.7 2.2"/>
<line x1="593.79" y1="105.1" x2="593.79" y2="346.5" stroke="#7a7a7a" stroke-width="1" stroke-dasharray="1.7 2.2"/>
<line x1="598.70" y1="105.1" x2="598.70" y2="346.5" stroke="#7a7a7a" stroke-width="1" stroke-dasharray="1.7 2.2"/>
<line x1="631.02" y1="105.1" x2="631.02" y2="346.5" stroke="#7a7a7a" stroke-width="1" stroke-dasharray="1.7 2.2"/>
<line x1="649.93" y1="105.1" x2="649.93" y2="346.5" stroke="#7a7a7a" stroke-width="1" stroke-dasharray="1.7 2.2"/>
<line x1="663.35" y1="105.1" x2="663.35" y2="346.5" stroke="#7a7a7a" stroke-width="1" stroke-dasharray="1.7 2.2"/>
<line x1="673.76" y1="105.1" x2="673.76" y2="346.5" stroke="#7a7a7a" stroke-width="1" stroke-dasharray="1.7 2.2"/>
<line x1="682.26" y1="105.1" x2="682.26" y2="346.5" stroke="#7a7a7a" stroke-width="1" stroke-dasharray="1.7 2.2"/>
<line x1="689.45" y1="105.1" x2="689.45" y2="346.5" stroke="#7a7a7a" stroke-width="1" stroke-dasharray="1.7 2.2"/>
<line x1="695.67" y1="105.1" x2="695.67" y2="346.5" stroke="#7a7a7a" stroke-width="1" stroke-dasharray="1.7 2.2"/>
<line x1="701.17" y1="105.1" x2="701.17" y2="346.5" stroke="#7a7a7a" stroke-width="1" stroke-dasharray="1.7 2.2"/>
<line x1="706.08" y1="105.1" x2="706.08" y2="346.5" stroke="#7a7a7a" stroke-width="1" stroke-dasharray="1.7 2.2"/>
<line x1="738.40" y1="105.1" x2="738.40" y2="346.5" stroke="#7a7a7a" stroke-width="1" stroke-dasharray="1.7 2.2"/>
<line x1="757.31" y1="105.1" x2="757.31" y2="346.5" stroke="#7a7a7a" stroke-width="1" stroke-dasharray="1.7 2.2"/>
<line x1="770.73" y1="105.1" x2="770.73" y2="346.5" stroke="#7a7a7a" stroke-width="1" stroke-dasharray="1.7 2.2"/>
<line x1="781.14" y1="105.1" x2="781.14" y2="346.5" stroke="#7a7a7a" stroke-width="1" stroke-dasharray="1.7 2.2"/>
<line x1="789.64" y1="105.1" x2="789.64" y2="346.5" stroke="#7a7a7a" stroke-width="1" stroke-dasharray="1.7 2.2"/>
<line x1="796.83" y1="105.1" x2="796.83" y2="346.5" stroke="#7a7a7a" stroke-width="1" stroke-dasharray="1.7 2.2"/>
<line x1="803.05" y1="105.1" x2="803.05" y2="346.5" stroke="#7a7a7a" stroke-width="1" stroke-dasharray="1.7 2.2"/>
<line x1="808.55" y1="105.1" x2="808.55" y2="346.5" stroke="#7a7a7a" stroke-width="1" stroke-dasharray="1.7 2.2"/>
<line x1="813.46" y1="105.1" x2="813.46" y2="346.5" stroke="#7a7a7a" stroke-width="1" stroke-dasharray="1.7 2.2"/>
<line x1="845.78" y1="105.1" x2="845.78" y2="346.5" stroke="#7a7a7a" stroke-width="1" stroke-dasharray="1.7 2.2"/>
<line x1="864.69" y1="105.1" x2="864.69" y2="346.5" stroke="#7a7a7a" stroke-width="1" stroke-dasharray="1.7 2.2"/>
<line x1="878.11" y1="105.1" x2="878.11" y2="346.5" stroke="#7a7a7a" stroke-width="1" stroke-dasharray="1.7 2.2"/>
<line x1="888.52" y1="105.1" x2="888.52" y2="346.5" stroke="#7a7a7a" stroke-width="1" stroke-dasharray="1.7 2.2"/>
<line x1="897.02" y1="105.1" x2="897.02" y2="346.5" stroke="#7a7a7a" stroke-width="1" stroke-dasharray="1.7 2.2"/>
<line x1="904.21" y1="105.1" x2="904.21" y2="346.5" stroke="#7a7a7a" stroke-width="1" stroke-dasharray="1.7 2.2"/>
<line x1="910.43" y1="105.1" x2="910.43" y2="346.5" stroke="#7a7a7a" stroke-width="1" stroke-dasharray="1.7 2.2"/>
<line x1="915.93" y1="105.1" x2="915.93" y2="346.5" stroke="#7a7a7a" stroke-width="1" stroke-dasharray="1.7 2.2"/>
<line x1="920.84" y1="105.1" x2="920.84" y2="346.5" stroke="#7a7a7a" stroke-width="1" stroke-dasharray="1.7 2.2"/>
<line x1="953.16" y1="105.1" x2="953.16" y2="346.5" stroke="#7a7a7a" stroke-width="1" stroke-dasharray="1.7 2.2"/>
<line x1="972.07" y1="105.1" x2="972.07" y2="346.5" stroke="#7a7a7a" stroke-width="1" stroke-dasharray="1.7 2.2"/>
<line x1="985.49" y1="105.1" x2="985.49" y2="346.5" stroke="#7a7a7a" stroke-width="1" stroke-dasharray="1.7 2.2"/>
<line x1="995.90" y1="105.1" x2="995.90" y2="346.5" stroke="#7a7a7a" stroke-width="1" stroke-dasharray="1.7 2.2"/>
<line x1="1004.40" y1="105.1" x2="1004.40" y2="346.5" stroke="#7a7a7a" stroke-width="1" stroke-dasharray="1.7 2.2"/>
<line x1="1011.59" y1="105.1" x2="1011.59" y2="346.5" stroke="#7a7a7a" stroke-width="1" stroke-dasharray="1.7 2.2"/>
<line x1="1017.81" y1="105.1" x2="1017.81" y2="346.5" stroke="#7a7a7a" stroke-width="1" stroke-dasharray="1.7 2.2"/>
<line x1="1023.31" y1="105.1" x2="1023.31" y2="346.5" stroke="#7a7a7a" stroke-width="1" stroke-dasharray="1.7 2.2"/>
<line x1="1028.22" y1="105.1" x2="1028.22" y2="346.5" stroke="#7a7a7a" stroke-width="1" stroke-dasharray="1.7 2.2"/>
<line x1="1060.54" y1="105.1" x2="1060.54" y2="346.5" stroke="#7a7a7a" stroke-width="1" stroke-dasharray="1.7 2.2"/>
<line x1="1079.45" y1="105.1" x2="1079.45" y2="346.5" stroke="#7a7a7a" stroke-width="1" stroke-dasharray="1.7 2.2"/>
<line x1="1092.87" y1="105.1" x2="1092.87" y2="346.5" stroke="#7a7a7a" stroke-width="1" stroke-dasharray="1.7 2.2"/>
<line x1="1103.28" y1="105.1" x2="1103.28" y2="346.5" stroke="#7a7a7a" stroke-width="1" stroke-dasharray="1.7 2.2"/>
<line x1="1111.78" y1="105.1" x2="1111.78" y2="346.5" stroke="#7a7a7a" stroke-width="1" stroke-dasharray="1.7 2.2"/>
<line x1="1118.97" y1="105.1" x2="1118.97" y2="346.5" stroke="#7a7a7a" stroke-width="1" stroke-dasharray="1.7 2.2"/>
<line x1="1125.19" y1="105.1" x2="1125.19" y2="346.5" stroke="#7a7a7a" stroke-width="1" stroke-dasharray="1.7 2.2"/>
<line x1="1130.69" y1="105.1" x2="1130.69" y2="346.5" stroke="#7a7a7a" stroke-width="1" stroke-dasharray="1.7 2.2"/>
<line x1="1135.60" y1="105.1" x2="1135.60" y2="346.5" stroke="#7a7a7a" stroke-width="1" stroke-dasharray="1.7 2.2"/>
<line x1="1167.92" y1="105.1" x2="1167.92" y2="346.5" stroke="#7a7a7a" stroke-width="1" stroke-dasharray="1.7 2.2"/>
<line x1="1186.83" y1="105.1" x2="1186.83" y2="346.5" stroke="#7a7a7a" stroke-width="1" stroke-dasharray="1.7 2.2"/>
<line x1="1200.25" y1="105.1" x2="1200.25" y2="346.5" stroke="#7a7a7a" stroke-width="1" stroke-dasharray="1.7 2.2"/>
<line x1="1210.66" y1="105.1" x2="1210.66" y2="346.5" stroke="#7a7a7a" stroke-width="1" stroke-dasharray="1.7 2.2"/>
<line x1="1219.16" y1="105.1" x2="1219.16" y2="346.5" stroke="#7a7a7a" stroke-width="1" stroke-dasharray="1.7 2.2"/>
<line x1="1226.35" y1="105.1" x2="1226.35" y2="346.5" stroke="#7a7a7a" stroke-width="1" stroke-dasharray="1.7 2.2"/>
<line x1="1232.57" y1="105.1" x2="1232.57" y2="346.5" stroke="#7a7a7a" stroke-width="1" stroke-dasharray="1.7 2.2"/>
<line x1="1238.07" y1="105.1" x2="1238.07" y2="346.5" stroke="#7a7a7a" stroke-width="1" stroke-dasharray="1.7 2.2"/>
<line x1="63.3" y1="164.80" x2="1241.9799999999998" y2="164.80" stroke="#7a7a7a" stroke-width="1" stroke-dasharray="1.7 2.2"/>
<line x1="63.3" y1="225.40" x2="1241.9799999999998" y2="225.40" stroke="#7a7a7a" stroke-width="1" stroke-dasharray="1.7 2.2"/>
<line x1="63.3" y1="286.90" x2="1241.9799999999998" y2="286.90" stroke="#7a7a7a" stroke-width="1" stroke-dasharray="1.7 2.2"/>
<path d="M55.8 103.50 H61.8 M58.8 146.14 H61.8 M58.8 135.40 H61.8 M58.8 127.77 H61.8 M58.8 121.86 H61.8 M58.8 117.03 H61.8 M58.8 112.95 H61.8 M58.8 109.41 H61.8 M58.8 106.29 H61.8 M55.8 164.50 H61.8 M58.8 207.14 H61.8 M58.8 196.40 H61.8 M58.8 188.77 H61.8 M58.8 182.86 H61.8 M58.8 178.03 H61.8 M58.8 173.95 H61.8 M58.8 170.41 H61.8 M58.8 167.29 H61.8 M55.8 225.50 H61.8 M58.8 268.14 H61.8 M58.8 257.40 H61.8 M58.8 249.77 H61.8 M58.8 243.86 H61.8 M58.8 239.03 H61.8 M58.8 234.95 H61.8 M58.8 231.41 H61.8 M58.8 228.29 H61.8 M55.8 286.50 H61.8 M58.8 329.14 H61.8 M58.8 318.40 H61.8 M58.8 310.77 H61.8 M58.8 304.86 H61.8 M58.8 300.03 H61.8 M58.8 295.95 H61.8 M58.8 292.41 H61.8 M58.8 289.29 H61.8 M55.8 347.50 H61.8 M61.80 347.5 V352.5 M94.12 347.5 V350.5 M113.03 347.5 V350.5 M126.45 347.5 V350.5 M136.86 347.5 V350.5 M145.36 347.5 V350.5 M152.55 347.5 V350.5 M158.77 347.5 V350.5 M164.27 347.5 V350.5 M169.18 347.5 V352.5 M201.50 347.5 V350.5 M220.41 347.5 V350.5 M233.83 347.5 V350.5 M244.24 347.5 V350.5 M252.74 347.5 V350.5 M259.93 347.5 V350.5 M266.15 347.5 V350.5 M271.65 347.5 V350.5 M276.56 347.5 V352.5 M308.88 347.5 V350.5 M327.79 347.5 V350.5 M341.21 347.5 V350.5 M351.62 347.5 V350.5 M360.12 347.5 V350.5 M367.31 347.5 V350.5 M373.53 347.5 V350.5 M379.03 347.5 V350.5 M383.94 347.5 V352.5 M416.26 347.5 V350.5 M435.17 347.5 V350.5 M448.59 347.5 V350.5 M459.00 347.5 V350.5 M467.50 347.5 V350.5 M474.69 347.5 V350.5 M480.91 347.5 V350.5 M486.41 347.5 V350.5 M491.32 347.5 V352.5 M523.64 347.5 V350.5 M542.55 347.5 V350.5 M555.97 347.5 V350.5 M566.38 347.5 V350.5 M574.88 347.5 V350.5 M582.07 347.5 V350.5 M588.29 347.5 V350.5 M593.79 347.5 V350.5 M598.70 347.5 V352.5 M631.02 347.5 V350.5 M649.93 347.5 V350.5 M663.35 347.5 V350.5 M673.76 347.5 V350.5 M682.26 347.5 V350.5 M689.45 347.5 V350.5 M695.67 347.5 V350.5 M701.17 347.5 V350.5 M706.08 347.5 V352.5 M738.40 347.5 V350.5 M757.31 347.5 V350.5 M770.73 347.5 V350.5 M781.14 347.5 V350.5 M789.64 347.5 V350.5 M796.83 347.5 V350.5 M803.05 347.5 V350.5 M808.55 347.5 V350.5 M813.46 347.5 V352.5 M845.78 347.5 V350.5 M864.69 347.5 V350.5 M878.11 347.5 V350.5 M888.52 347.5 V350.5 M897.02 347.5 V350.5 M904.21 347.5 V350.5 M910.43 347.5 V350.5 M915.93 347.5 V350.5 M920.84 347.5 V352.5 M953.16 347.5 V350.5 M972.07 347.5 V350.5 M985.49 347.5 V350.5 M995.90 347.5 V350.5 M1004.40 347.5 V350.5 M1011.59 347.5 V350.5 M1017.81 347.5 V350.5 M1023.31 347.5 V350.5 M1028.22 347.5 V352.5 M1060.54 347.5 V350.5 M1079.45 347.5 V350.5 M1092.87 347.5 V350.5 M1103.28 347.5 V350.5 M1111.78 347.5 V350.5 M1118.97 347.5 V350.5 M1125.19 347.5 V350.5 M1130.69 347.5 V350.5 M1135.60 347.5 V352.5 M1167.92 347.5 V350.5 M1186.83 347.5 V350.5 M1200.25 347.5 V350.5 M1210.66 347.5 V350.5 M1219.16 347.5 V350.5 M1226.35 347.5 V350.5 M1232.57 347.5 V350.5 M1238.07 347.5 V350.5 M1242.98 347.5 V352.5" stroke="#111" stroke-width="1.5" fill="none"/>
<rect x="61.8" y="103.5" width="1181.18" height="244.00" fill="none" stroke="#111" stroke-width="2"/>
<clipPath id="pc"><rect x="62.8" y="104.5" width="1179.2" height="242.0"/></clipPath>
<g clip-path="url(#pc)">
<polyline points="62.8,184.38 63.8,184.70 64.8,185.03 65.8,185.37 66.8,185.70 67.8,186.03 68.8,186.36 69.8,186.69 70.8,187.03 71.8,187.36 72.8,187.69 73.8,188.02 74.8,188.36 75.8,188.69 76.8,189.02 77.8,189.35 78.8,189.68 79.8,190.01 80.8,190.34 81.8,190.67 82.8,191.00 83.8,191.32 84.8,191.64 85.8,191.97 86.8,192.29 87.8,192.60 88.8,192.92 89.8,193.23 90.8,193.55 91.8,193.86 92.8,194.16 93.8,194.47 94.8,194.77 95.8,195.07 96.8,195.37 97.8,195.67 98.8,195.97 99.8,196.26 100.8,196.55 101.8,196.85 102.8,197.14 103.8,197.43 104.8,197.72 105.8,198.00 106.8,198.29 107.8,198.58 108.8,198.87 109.8,199.16 110.8,199.45 111.8,199.74 112.8,200.03 113.8,200.32 114.8,200.61 115.8,200.90 116.8,201.19 117.8,201.49 118.8,201.78 119.8,202.08 120.8,202.37 121.8,202.66 122.8,202.96 123.8,203.25 124.8,203.55 125.8,203.84 126.8,204.13 127.8,204.42 128.8,204.71 129.8,205.00 130.8,205.29 131.8,205.57 132.8,205.85 133.8,206.13 134.8,206.41 135.8,206.69 136.8,206.96 137.8,207.23 138.8,207.50 139.8,207.77 140.8,208.03 141.8,208.29 142.8,208.55 143.8,208.80 144.8,209.06 145.8,209.31 146.8,209.56 147.8,209.80 148.8,210.05 149.8,210.29 150.8,210.53 151.8,210.77 152.8,211.01 153.8,211.24 154.8,211.48 155.8,211.71 156.8,211.94 157.8,212.17 158.8,212.40 159.8,212.63 160.8,212.86 161.8,213.09 162.8,213.31 163.8,213.54 164.8,213.76 165.8,213.99 166.8,214.21 167.8,214.43 168.8,214.66 169.8,214.88 170.8,215.10 171.8,215.32 172.8,215.55 173.8,215.77 174.8,215.99 175.8,216.21 176.8,216.42 177.8,216.64 178.8,216.86 179.8,217.07 180.8,217.29 181.8,217.50 182.8,217.71 183.8,217.92 184.8,218.13 185.8,218.34 186.8,218.55 187.8,218.75 188.8,218.95 189.8,219.15 190.8,219.35 191.8,219.55 192.8,219.74 193.8,219.93 194.8,220.12 195.8,220.31 196.8,220.50 197.8,220.68 198.8,220.86 199.8,221.04 200.8,221.22 201.8,221.39 202.8,221.57 203.8,221.74 204.8,221.91 205.8,222.07 206.8,222.24 207.8,222.40 208.8,222.56 209.8,222.72 210.8,222.88 211.8,223.03 212.8,223.19 213.8,223.34 214.8,223.49 215.8,223.64 216.8,223.79 217.8,223.93 218.8,224.07 219.8,224.22 220.8,224.36 221.8,224.50 222.8,224.63 223.8,224.77 224.8,224.90 225.8,225.03 226.8,225.16 227.8,225.29 228.8,225.41 229.8,225.53 230.8,225.65 231.8,225.77 232.8,225.88 233.8,225.99 234.8,226.10 235.8,226.21 236.8,226.31 237.8,226.41 238.8,226.50 239.8,226.60 240.8,226.69 241.8,226.78 242.8,226.87 243.8,226.95 244.8,227.03 245.8,227.12 246.8,227.20 247.8,227.27 248.8,227.35 249.8,227.43 250.8,227.50 251.8,227.57 252.8,227.65 253.8,227.72 254.8,227.79 255.8,227.86 256.8,227.93 257.8,228.00 258.8,228.07 259.8,228.14 260.8,228.20 261.8,228.27 262.8,228.34 263.8,228.40 264.8,228.47 265.8,228.53 266.8,228.59 267.8,228.66 268.8,228.72 269.8,228.78 270.8,228.84 271.8,228.89 272.8,228.95 273.8,229.01 274.8,229.06 275.8,229.12 276.8,229.17 277.8,229.22 278.8,229.27 279.8,229.32 280.8,229.36 281.8,229.41 282.8,229.45 283.8,229.50 284.8,229.54 285.8,229.58 286.8,229.62 287.8,229.66 288.8,229.70 289.8,229.74 290.8,229.77 291.8,229.81 292.8,229.84 293.8,229.88 294.8,229.91 295.8,229.94 296.8,229.97 297.8,230.00 298.8,230.03 299.8,230.06 300.8,230.09 301.8,230.12 302.8,230.15 303.8,230.17 304.8,230.20 305.8,230.23 306.8,230.25 307.8,230.28 308.8,230.30 309.8,230.32 310.8,230.35 311.8,230.37 312.8,230.39 313.8,230.42 314.8,230.44 315.8,230.46 316.8,230.48 317.8,230.50 318.8,230.52 319.8,230.54 320.8,230.56 321.8,230.58 322.8,230.60 323.8,230.61 324.8,230.63 325.8,230.65 326.8,230.67 327.8,230.68 328.8,230.70 329.8,230.72 330.8,230.73 331.8,230.75 332.8,230.76 333.8,230.78 334.8,230.79 335.8,230.80 336.8,230.82 337.8,230.83 338.8,230.84 339.8,230.86 340.8,230.87 341.8,230.88 342.8,230.89 343.8,230.90 344.8,230.91 345.8,230.92 346.8,230.93 347.8,230.94 348.8,230.95 349.8,230.96 350.8,230.97 351.8,230.97 352.8,230.98 353.8,230.99 354.8,231.00 355.8,231.00 356.8,231.01 357.8,231.01 358.8,231.02 359.8,231.02 360.8,231.03 361.8,231.03 362.8,231.03 363.8,231.04 364.8,231.04 365.8,231.04 366.8,231.05 367.8,231.05 368.8,231.05 369.8,231.05 370.8,231.06 371.8,231.06 372.8,231.06 373.8,231.06 374.8,231.06 375.8,231.06 376.8,231.07 377.8,231.07 378.8,231.07 379.8,231.07 380.8,231.07 381.8,231.07 382.8,231.07 383.8,231.07 384.8,231.07 385.8,231.07 386.8,231.07 387.8,231.07 388.8,231.07 389.8,231.07 390.8,231.07 391.8,231.07 392.8,231.07 393.8,231.07 394.8,231.07 395.8,231.07 396.8,231.07 397.8,231.07 398.8,231.07 399.8,231.06 400.8,231.06 401.8,231.06 402.8,231.06 403.8,231.06 404.8,231.06 405.8,231.06 406.8,231.06 407.8,231.06 408.8,231.05 409.8,231.05 410.8,231.05 411.8,231.05 412.8,231.05 413.8,231.05 414.8,231.05 415.8,231.04 416.8,231.04 417.8,231.04 418.8,231.04 419.8,231.04 420.8,231.04 421.8,231.03 422.8,231.03 423.8,231.03 424.8,231.03 425.8,231.03 426.8,231.03 427.8,231.02 428.8,231.02 429.8,231.02 430.8,231.02 431.8,231.02 432.8,231.02 433.8,231.01 434.8,231.01 435.8,231.01 436.8,231.01 437.8,231.01 438.8,231.00 439.8,231.00 440.8,231.00 441.8,231.00 442.8,231.00 443.8,231.00 444.8,231.00 445.8,230.99 446.8,230.99 447.8,230.99 448.8,230.99 449.8,230.99 450.8,230.99 451.8,230.99 452.8,230.99 453.8,230.98 454.8,230.98 455.8,230.98 456.8,230.98 457.8,230.98 458.8,230.98 459.8,230.98 460.8,230.98 461.8,230.98 462.8,230.98 463.8,230.98 464.8,230.98 465.8,230.98 466.8,230.98 467.8,230.98 468.8,230.98 469.8,230.98 470.8,230.98 471.8,230.98 472.8,230.98 473.8,230.98 474.8,230.98 475.8,230.98 476.8,230.99 477.8,230.99 478.8,230.99 479.8,231.00 480.8,231.00 481.8,231.01 482.8,231.01 483.8,231.02 484.8,231.03 485.8,231.04 486.8,231.04 487.8,231.05 488.8,231.06 489.8,231.08 490.8,231.09 491.8,231.10 492.8,231.12 493.8,231.13 494.8,231.15 495.8,231.16 496.8,231.18 497.8,231.20 498.8,231.22 499.8,231.24 500.8,231.26 501.8,231.28 502.8,231.30 503.8,231.32 504.8,231.34 505.8,231.37 506.8,231.39 507.8,231.41 508.8,231.44 509.8,231.46 510.8,231.48 511.8,231.51 512.8,231.53 513.8,231.56 514.8,231.58 515.8,231.60 516.8,231.63 517.8,231.65 518.8,231.68 519.8,231.70 520.8,231.72 521.8,231.75 522.8,231.77 523.8,231.80 524.8,231.82 525.8,231.85 526.8,231.87 527.8,231.90 528.8,231.92 529.8,231.95 530.8,231.98 531.8,232.01 532.8,232.03 533.8,232.06 534.8,232.10 535.8,232.13 536.8,232.16 537.8,232.20 538.8,232.23 539.8,232.27 540.8,232.31 541.8,232.35 542.8,232.39 543.8,232.44 544.8,232.49 545.8,232.54 546.8,232.59 547.8,232.64 548.8,232.70 549.8,232.76 550.8,232.82 551.8,232.89 552.8,232.96 553.8,233.03 554.8,233.10 555.8,233.18 556.8,233.26 557.8,233.34 558.8,233.43 559.8,233.52 560.8,233.62 561.8,233.72 562.8,233.82 563.8,233.93 564.8,234.04 565.8,234.15 566.8,234.27 567.8,234.39 568.8,234.52 569.8,234.65 570.8,234.78 571.8,234.92 572.8,235.06 573.8,235.21 574.8,235.36 575.8,235.51 576.8,235.67 577.8,235.84 578.8,236.00 579.8,236.17 580.8,236.35 581.8,236.53 582.8,236.72 583.8,236.91 584.8,237.10 585.8,237.31 586.8,237.51 587.8,237.73 588.8,237.95 589.8,238.17 590.8,238.41 591.8,238.65 592.8,238.89 593.8,239.15 594.8,239.41 595.8,239.67 596.8,239.95 597.8,240.23 598.8,240.52 599.8,240.82 600.8,241.12 601.8,241.43 602.8,241.75 603.8,242.07 604.8,242.40 605.8,242.73 606.8,243.07 607.8,243.42 608.8,243.77 609.8,244.13 610.8,244.49 611.8,244.86 612.8,245.23 613.8,245.61 614.8,245.99 615.8,246.38 616.8,246.77 617.8,247.17 618.8,247.57 619.8,247.98 620.8,248.39 621.8,248.80 622.8,249.22 623.8,249.65 624.8,250.08 625.8,250.51 626.8,250.94 627.8,251.38 628.8,251.83 629.8,252.27 630.8,252.72 631.8,253.17 632.8,253.63 633.8,254.09 634.8,254.55 635.8,255.01 636.8,255.47 637.8,255.94 638.8,256.41 639.8,256.87 640.8,257.34 641.8,257.81 642.8,258.28 643.8,258.76 644.8,259.23 645.8,259.70 646.8,260.17 647.8,260.65 648.8,261.12 649.8,261.60 650.8,262.08 651.8,262.56 652.8,263.04 653.8,263.52 654.8,264.01 655.8,264.49 656.8,264.98 657.8,265.48 658.8,265.98 659.8,266.48 660.8,266.98 661.8,267.49 662.8,268.00 663.8,268.52 664.8,269.04 665.8,269.56 666.8,270.09 667.8,270.61 668.8,271.15 669.8,271.68 670.8,272.22 671.8,272.76 672.8,273.30 673.8,273.84 674.8,274.39 675.8,274.93 676.8,275.48 677.8,276.03 678.8,276.57 679.8,277.12 680.8,277.68 681.8,278.23 682.8,278.78 683.8,279.34 684.8,279.89 685.8,280.45 686.8,281.01 687.8,281.58 688.8,282.14 689.8,282.71 690.8,283.28 691.8,283.85 692.8,284.42 693.8,285.00 694.8,285.58 695.8,286.16 696.8,286.74 697.8,287.32 698.8,287.90 699.8,288.48 700.8,289.06 701.8,289.64 702.8,290.22 703.8,290.80 704.8,291.37 705.8,291.95 706.8,292.52 707.8,293.08 708.8,293.65 709.8,294.21 710.8,294.77 711.8,295.33 712.8,295.88 713.8,296.44 714.8,296.99 715.8,297.53 716.8,298.08 717.8,298.63 718.8,299.17 719.8,299.71 720.8,300.26 721.8,300.80 722.8,301.34 723.8,301.88 724.8,302.43 725.8,302.97 726.8,303.52 727.8,304.06 728.8,304.61 729.8,305.17 730.8,305.72 731.8,306.28 732.8,306.84 733.8,307.40 734.8,307.96 735.8,308.53 736.8,309.10 737.8,309.68 738.8,310.26 739.8,310.84 740.8,311.43 741.8,312.01 742.8,312.61 743.8,313.20 744.8,313.80 745.8,314.40 746.8,315.00 747.8,315.61 748.8,316.22 749.8,316.83 750.8,317.44 751.8,318.05 752.8,318.67 753.8,319.29 754.8,319.91 755.8,320.53 756.8,321.15 757.8,321.77 758.8,322.40 759.8,323.02 760.8,323.65 761.8,324.28 762.8,324.91 763.8,325.54 764.8,326.17 765.8,326.80 766.8,327.43 767.8,328.06 768.8,328.69 769.8,329.32 770.8,329.96 771.8,330.59 772.8,331.23 773.8,331.86 774.8,332.49 775.8,333.13 776.8,333.76 777.8,334.39 778.8,335.03 779.8,335.66 780.8,336.29 781.8,336.92 782.8,337.55 783.8,338.18 784.8,338.81 785.8,339.43 786.8,340.06 787.8,340.68 788.8,341.31 789.8,341.93 790.8,342.55 791.8,343.17 792.8,343.79 793.8,344.40 794.8,345.02 795.8,345.63 796.8,346.25 797.8,346.86 798.8,347.47" fill="none" stroke="#0c0cc4" stroke-width="2.1" stroke-linejoin="round"/>
<polyline points="62.8,123.38 63.8,123.70 64.8,124.03 65.8,124.37 66.8,124.70 67.8,125.03 68.8,125.36 69.8,125.69 70.8,126.03 71.8,126.36 72.8,126.69 73.8,127.02 74.8,127.36 75.8,127.69 76.8,128.02 77.8,128.35 78.8,128.68 79.8,129.01 80.8,129.34 81.8,129.67 82.8,130.00 83.8,130.32 84.8,130.64 85.8,130.97 86.8,131.29 87.8,131.60 88.8,131.92 89.8,132.23 90.8,132.55 91.8,132.86 92.8,133.16 93.8,133.47 94.8,133.77 95.8,134.07 96.8,134.37 97.8,134.67 98.8,134.97 99.8,135.26 100.8,135.55 101.8,135.85 102.8,136.14 103.8,136.43 104.8,136.72 105.8,137.00 106.8,137.29 107.8,137.58 108.8,137.87 109.8,138.16 110.8,138.45 111.8,138.74 112.8,139.03 113.8,139.32 114.8,139.61 115.8,139.90 116.8,140.19 117.8,140.49 118.8,140.78 119.8,141.08 120.8,141.37 121.8,141.66 122.8,141.96 123.8,142.25 124.8,142.55 125.8,142.84 126.8,143.13 127.8,143.42 128.8,143.71 129.8,144.00 130.8,144.29 131.8,144.57 132.8,144.85 133.8,145.13 134.8,145.41 135.8,145.69 136.8,145.96 137.8,146.23 138.8,146.50 139.8,146.77 140.8,147.03 141.8,147.29 142.8,147.55 143.8,147.80 144.8,148.06 145.8,148.31 146.8,148.56 147.8,148.80 148.8,149.05 149.8,149.29 150.8,149.53 151.8,149.77 152.8,150.01 153.8,150.24 154.8,150.48 155.8,150.71 156.8,150.94 157.8,151.17 158.8,151.40 159.8,151.63 160.8,151.86 161.8,152.09 162.8,152.31 163.8,152.54 164.8,152.76 165.8,152.99 166.8,153.21 167.8,153.43 168.8,153.66 169.8,153.88 170.8,154.10 171.8,154.32 172.8,154.55 173.8,154.77 174.8,154.99 175.8,155.21 176.8,155.42 177.8,155.64 178.8,155.86 179.8,156.07 180.8,156.29 181.8,156.50 182.8,156.71 183.8,156.92 184.8,157.13 185.8,157.34 186.8,157.55 187.8,157.75 188.8,157.95 189.8,158.15 190.8,158.35 191.8,158.55 192.8,158.74 193.8,158.93 194.8,159.12 195.8,159.31 196.8,159.50 197.8,159.68 198.8,159.86 199.8,160.04 200.8,160.22 201.8,160.39 202.8,160.57 203.8,160.74 204.8,160.91 205.8,161.07 206.8,161.24 207.8,161.40 208.8,161.56 209.8,161.72 210.8,161.88 211.8,162.03 212.8,162.19 213.8,162.34 214.8,162.49 215.8,162.64 216.8,162.79 217.8,162.93 218.8,163.07 219.8,163.22 220.8,163.36 221.8,163.50 222.8,163.63 223.8,163.77 224.8,163.90 225.8,164.03 226.8,164.16 227.8,164.29 228.8,164.41 229.8,164.53 230.8,164.65 231.8,164.77 232.8,164.88 233.8,164.99 234.8,165.10 235.8,165.21 236.8,165.31 237.8,165.41 238.8,165.50 239.8,165.60 240.8,165.69 241.8,165.78 242.8,165.87 243.8,165.95 244.8,166.03 245.8,166.12 246.8,166.20 247.8,166.27 248.8,166.35 249.8,166.43 250.8,166.50 251.8,166.57 252.8,166.65 253.8,166.72 254.8,166.79 255.8,166.86 256.8,166.93 257.8,167.00 258.8,167.07 259.8,167.14 260.8,167.20 261.8,167.27 262.8,167.34 263.8,167.40 264.8,167.47 265.8,167.53 266.8,167.59 267.8,167.66 268.8,167.72 269.8,167.78 270.8,167.84 271.8,167.89 272.8,167.95 273.8,168.01 274.8,168.06 275.8,168.12 276.8,168.17 277.8,168.22 278.8,168.27 279.8,168.32 280.8,168.36 281.8,168.41 282.8,168.45 283.8,168.50 284.8,168.54 285.8,168.58 286.8,168.62 287.8,168.66 288.8,168.70 289.8,168.74 290.8,168.77 291.8,168.81 292.8,168.84 293.8,168.88 294.8,168.91 295.8,168.94 296.8,168.97 297.8,169.00 298.8,169.03 299.8,169.06 300.8,169.09 301.8,169.12 302.8,169.15 303.8,169.17 304.8,169.20 305.8,169.23 306.8,169.25 307.8,169.28 308.8,169.30 309.8,169.32 310.8,169.35 311.8,169.37 312.8,169.39 313.8,169.42 314.8,169.44 315.8,169.46 316.8,169.48 317.8,169.50 318.8,169.52 319.8,169.54 320.8,169.56 321.8,169.58 322.8,169.60 323.8,169.61 324.8,169.63 325.8,169.65 326.8,169.67 327.8,169.68 328.8,169.70 329.8,169.72 330.8,169.73 331.8,169.75 332.8,169.76 333.8,169.78 334.8,169.79 335.8,169.80 336.8,169.82 337.8,169.83 338.8,169.84 339.8,169.86 340.8,169.87 341.8,169.88 342.8,169.89 343.8,169.90 344.8,169.91 345.8,169.92 346.8,169.93 347.8,169.94 348.8,169.95 349.8,169.96 350.8,169.97 351.8,169.97 352.8,169.98 353.8,169.99 354.8,170.00 355.8,170.00 356.8,170.01 357.8,170.01 358.8,170.02 359.8,170.02 360.8,170.03 361.8,170.03 362.8,170.03 363.8,170.04 364.8,170.04 365.8,170.04 366.8,170.05 367.8,170.05 368.8,170.05 369.8,170.05 370.8,170.06 371.8,170.06 372.8,170.06 373.8,170.06 374.8,170.06 375.8,170.06 376.8,170.07 377.8,170.07 378.8,170.07 379.8,170.07 380.8,170.07 381.8,170.07 382.8,170.07 383.8,170.07 384.8,170.07 385.8,170.07 386.8,170.07 387.8,170.07 388.8,170.07 389.8,170.07 390.8,170.07 391.8,170.07 392.8,170.07 393.8,170.07 394.8,170.07 395.8,170.07 396.8,170.07 397.8,170.07 398.8,170.07 399.8,170.06 400.8,170.06 401.8,170.06 402.8,170.06 403.8,170.06 404.8,170.06 405.8,170.06 406.8,170.06 407.8,170.06 408.8,170.05 409.8,170.05 410.8,170.05 411.8,170.05 412.8,170.05 413.8,170.05 414.8,170.05 415.8,170.04 416.8,170.04 417.8,170.04 418.8,170.04 419.8,170.04 420.8,170.04 421.8,170.03 422.8,170.03 423.8,170.03 424.8,170.03 425.8,170.03 426.8,170.03 427.8,170.02 428.8,170.02 429.8,170.02 430.8,170.02 431.8,170.02 432.8,170.02 433.8,170.01 434.8,170.01 435.8,170.01 436.8,170.01 437.8,170.01 438.8,170.00 439.8,170.00 440.8,170.00 441.8,170.00 442.8,170.00 443.8,170.00 444.8,170.00 445.8,169.99 446.8,169.99 447.8,169.99 448.8,169.99 449.8,169.99 450.8,169.99 451.8,169.99 452.8,169.99 453.8,169.98 454.8,169.98 455.8,169.98 456.8,169.98 457.8,169.98 458.8,169.98 459.8,169.98 460.8,169.98 461.8,169.98 462.8,169.98 463.8,169.98 464.8,169.98 465.8,169.98 466.8,169.98 467.8,169.98 468.8,169.98 469.8,169.98 470.8,169.98 471.8,169.98 472.8,169.98 473.8,169.98 474.8,169.98 475.8,169.98 476.8,169.99 477.8,169.99 478.8,169.99 479.8,170.00 480.8,170.00 481.8,170.01 482.8,170.01 483.8,170.02 484.8,170.03 485.8,170.04 486.8,170.04 487.8,170.05 488.8,170.06 489.8,170.08 490.8,170.09 491.8,170.10 492.8,170.12 493.8,170.13 494.8,170.15 495.8,170.16 496.8,170.18 497.8,170.20 498.8,170.22 499.8,170.24 500.8,170.26 501.8,170.28 502.8,170.30 503.8,170.32 504.8,170.34 505.8,170.37 506.8,170.39 507.8,170.41 508.8,170.44 509.8,170.46 510.8,170.48 511.8,170.51 512.8,170.53 513.8,170.56 514.8,170.58 515.8,170.60 516.8,170.63 517.8,170.65 518.8,170.68 519.8,170.70 520.8,170.72 521.8,170.75 522.8,170.77 523.8,170.80 524.8,170.82 525.8,170.85 526.8,170.87 527.8,170.90 528.8,170.92 529.8,170.95 530.8,170.98 531.8,171.01 532.8,171.03 533.8,171.06 534.8,171.10 535.8,171.13 536.8,171.16 537.8,171.20 538.8,171.23 539.8,171.27 540.8,171.31 541.8,171.35 542.8,171.39 543.8,171.44 544.8,171.49 545.8,171.54 546.8,171.59 547.8,171.64 548.8,171.70 549.8,171.76 550.8,171.82 551.8,171.89 552.8,171.96 553.8,172.03 554.8,172.10 555.8,172.18 556.8,172.26 557.8,172.34 558.8,172.43 559.8,172.52 560.8,172.62 561.8,172.72 562.8,172.82 563.8,172.93 564.8,173.04 565.8,173.15 566.8,173.27 567.8,173.39 568.8,173.52 569.8,173.65 570.8,173.78 571.8,173.92 572.8,174.06 573.8,174.21 574.8,174.36 575.8,174.51 576.8,174.67 577.8,174.84 578.8,175.00 579.8,175.17 580.8,175.35 581.8,175.53 582.8,175.72 583.8,175.91 584.8,176.10 585.8,176.31 586.8,176.51 587.8,176.73 588.8,176.95 589.8,177.17 590.8,177.41 591.8,177.65 592.8,177.89 593.8,178.15 594.8,178.41 595.8,178.67 596.8,178.95 597.8,179.23 598.8,179.52 599.8,179.82 600.8,180.12 601.8,180.43 602.8,180.75 603.8,181.07 604.8,181.40 605.8,181.73 606.8,182.07 607.8,182.42 608.8,182.77 609.8,183.13 610.8,183.49 611.8,183.86 612.8,184.23 613.8,184.61 614.8,184.99 615.8,185.38 616.8,185.77 617.8,186.17 618.8,186.57 619.8,186.98 620.8,187.39 621.8,187.80 622.8,188.22 623.8,188.65 624.8,189.08 625.8,189.51 626.8,189.94 627.8,190.38 628.8,190.83 629.8,191.27 630.8,191.72 631.8,192.17 632.8,192.63 633.8,193.09 634.8,193.55 635.8,194.01 636.8,194.47 637.8,194.94 638.8,195.41 639.8,195.87 640.8,196.34 641.8,196.81 642.8,197.28 643.8,197.76 644.8,198.23 645.8,198.70 646.8,199.17 647.8,199.65 648.8,200.12 649.8,200.60 650.8,201.08 651.8,201.56 652.8,202.04 653.8,202.52 654.8,203.01 655.8,203.49 656.8,203.98 657.8,204.48 658.8,204.98 659.8,205.48 660.8,205.98 661.8,206.49 662.8,207.00 663.8,207.52 664.8,208.04 665.8,208.56 666.8,209.09 667.8,209.61 668.8,210.15 669.8,210.68 670.8,211.22 671.8,211.76 672.8,212.30 673.8,212.84 674.8,213.39 675.8,213.93 676.8,214.48 677.8,215.03 678.8,215.57 679.8,216.12 680.8,216.68 681.8,217.23 682.8,217.78 683.8,218.34 684.8,218.89 685.8,219.45 686.8,220.01 687.8,220.58 688.8,221.14 689.8,221.71 690.8,222.28 691.8,222.85 692.8,223.42 693.8,224.00 694.8,224.58 695.8,225.16 696.8,225.74 697.8,226.32 698.8,226.90 699.8,227.48 700.8,228.06 701.8,228.64 702.8,229.22 703.8,229.80 704.8,230.37 705.8,230.95 706.8,231.52 707.8,232.08 708.8,232.65 709.8,233.21 710.8,233.77 711.8,234.33 712.8,234.88 713.8,235.44 714.8,235.99 715.8,236.53 716.8,237.08 717.8,237.63 718.8,238.17 719.8,238.71 720.8,239.26 721.8,239.80 722.8,240.34 723.8,240.88 724.8,241.43 725.8,241.97 726.8,242.52 727.8,243.06 728.8,243.61 729.8,244.17 730.8,244.72 731.8,245.28 732.8,245.84 733.8,246.40 734.8,246.96 735.8,247.53 736.8,248.10 737.8,248.68 738.8,249.26 739.8,249.84 740.8,250.43 741.8,251.01 742.8,251.61 743.8,252.20 744.8,252.80 745.8,253.40 746.8,254.00 747.8,254.61 748.8,255.22 749.8,255.83 750.8,256.44 751.8,257.05 752.8,257.67 753.8,258.29 754.8,258.91 755.8,259.53 756.8,260.15 757.8,260.77 758.8,261.40 759.8,262.02 760.8,262.65 761.8,263.28 762.8,263.91 763.8,264.54 764.8,265.17 765.8,265.80 766.8,266.43 767.8,267.06 768.8,267.69 769.8,268.32 770.8,268.96 771.8,269.59 772.8,270.23 773.8,270.86 774.8,271.49 775.8,272.13 776.8,272.76 777.8,273.39 778.8,274.03 779.8,274.66 780.8,275.29 781.8,275.92 782.8,276.55 783.8,277.18 784.8,277.81 785.8,278.43 786.8,279.06 787.8,279.68 788.8,280.31 789.8,280.93 790.8,281.55 791.8,282.17 792.8,282.79 793.8,283.40 794.8,284.02 795.8,284.63 796.8,285.25 797.8,285.86 798.8,286.47 799.8,287.09 800.8,287.70 801.8,288.31 802.8,288.93 803.8,289.54 804.8,290.16 805.8,290.77 806.8,291.39 807.8,292.01 808.8,292.63 809.8,293.25 810.8,293.87 811.8,294.49 812.8,295.12 813.8,295.75 814.8,296.37 815.8,297.00 816.8,297.63 817.8,298.26 818.8,298.89 819.8,299.52 820.8,300.16 821.8,300.79 822.8,301.42 823.8,302.05 824.8,302.68 825.8,303.31 826.8,303.94 827.8,304.57 828.8,305.20 829.8,305.83 830.8,306.46 831.8,307.09 832.8,307.72 833.8,308.34 834.8,308.97 835.8,309.60 836.8,310.22 837.8,310.85 838.8,311.48 839.8,312.11 840.8,312.74 841.8,313.37 842.8,314.00 843.8,314.63 844.8,315.27 845.8,315.90 846.8,316.54 847.8,317.18 848.8,317.82 849.8,318.46 850.8,319.11 851.8,319.76 852.8,320.41 853.8,321.06 854.8,321.72 855.8,322.38 856.8,323.04 857.8,323.71 858.8,324.38 859.8,325.05 860.8,325.73 861.8,326.41 862.8,327.09 863.8,327.78 864.8,328.47 865.8,329.17 866.8,329.87 867.8,330.57 868.8,331.28 869.8,332.00 870.8,332.72 871.8,333.44 872.8,334.17 873.8,334.91 874.8,335.65 875.8,336.40 876.8,337.15 877.8,337.91 878.8,338.68 879.8,339.45 880.8,340.22 881.8,341.00 882.8,341.79 883.8,342.58 884.8,343.37 885.8,344.17 886.8,344.97 887.8,345.77 888.8,346.58 889.8,347.39" fill="none" stroke="#107010" stroke-width="2.1" stroke-linejoin="round"/>
</g>
<text x="337" y="100" font-size="8.5" font-weight="bold" fill="#2b8a2b" text-anchor="start" textLength="38.9" lengthAdjust="spacingAndGlyphs" >V(onoise)</text>
<text x="928.9" y="100" font-size="8.5" font-weight="bold" fill="#2525c8" text-anchor="start" textLength="36.0" lengthAdjust="spacingAndGlyphs" >V(inoise)</text>
<text x="56" y="106.6" font-size="8.4" font-weight="bold" fill="#333" text-anchor="end" textLength="46.8" lengthAdjust="spacingAndGlyphs" >1e-06V/Hz½</text>
<text x="56" y="167.6" font-size="8.4" font-weight="bold" fill="#333" text-anchor="end" textLength="46.8" lengthAdjust="spacingAndGlyphs" >1e-07V/Hz½</text>
<text x="56" y="228.6" font-size="8.4" font-weight="bold" fill="#333" text-anchor="end" textLength="46.8" lengthAdjust="spacingAndGlyphs" >1e-08V/Hz½</text>
<text x="56" y="289.6" font-size="8.4" font-weight="bold" fill="#333" text-anchor="end" textLength="46.8" lengthAdjust="spacingAndGlyphs" >1e-09V/Hz½</text>
<text x="56" y="350.6" font-size="8.4" font-weight="bold" fill="#333" text-anchor="end" textLength="46.8" lengthAdjust="spacingAndGlyphs" >1e-10V/Hz½</text>
<text x="61.8" y="360.8" font-size="8.4" font-weight="bold" fill="#333" text-anchor="middle" >100mHz</text>
<text x="169.2" y="360.8" font-size="8.4" font-weight="bold" fill="#333" text-anchor="middle" >1Hz</text>
<text x="276.6" y="360.8" font-size="8.4" font-weight="bold" fill="#333" text-anchor="middle" >10Hz</text>
<text x="383.9" y="360.8" font-size="8.4" font-weight="bold" fill="#333" text-anchor="middle" >100Hz</text>
<text x="491.3" y="360.8" font-size="8.4" font-weight="bold" fill="#333" text-anchor="middle" >1KHz</text>
<text x="598.7" y="360.8" font-size="8.4" font-weight="bold" fill="#333" text-anchor="middle" >10KHz</text>
<text x="706.1" y="360.8" font-size="8.4" font-weight="bold" fill="#333" text-anchor="middle" >100KHz</text>
<text x="813.5" y="360.8" font-size="8.4" font-weight="bold" fill="#333" text-anchor="middle" >1MHz</text>
<text x="920.8" y="360.8" font-size="8.4" font-weight="bold" fill="#333" text-anchor="middle" >10MHz</text>
<text x="1028.2" y="360.8" font-size="8.4" font-weight="bold" fill="#333" text-anchor="middle" >100MHz</text>
<text x="1135.6" y="360.8" font-size="8.4" font-weight="bold" fill="#333" text-anchor="middle" >1GHz</text>
<text x="1243.0" y="360.8" font-size="8.4" font-weight="bold" fill="#333" text-anchor="middle" >10GHz</text>
<path d="M185 467 V479.3" stroke="#40409c" stroke-width="1.25" fill="none" stroke-linejoin="miter" />
<circle cx="185" cy="495.5" r="16.2" stroke="#40409c" stroke-width="1.25" fill="none"/>
<path d="M180.3 486.3 H189.7 M185 482.54 V490.06" stroke="#40409c" stroke-width="1.25" fill="none" stroke-linejoin="miter" />
<path d="M180.3 505.7 H189.7" stroke="#40409c" stroke-width="1.25" fill="none" stroke-linejoin="miter" />
<path d="M185 511.7 V524.5" stroke="#40409c" stroke-width="1.25" fill="none" stroke-linejoin="miter" />
<path d="M176 524.5 H194 L185 534.0 Z" stroke="#40409c" stroke-width="1.25" fill="none" stroke-linejoin="miter" />
<text x="197.45000000000002" y="480.5" font-size="10.0" font-weight="bold" fill="#111" text-anchor="start" textLength="13.2" lengthAdjust="spacingAndGlyphs" stroke="#111" stroke-width="0.32">V1</text>
<text x="198.05" y="520.7" font-size="10.0" font-weight="bold" fill="#111" text-anchor="start" textLength="12.8" lengthAdjust="spacingAndGlyphs" stroke="#111" stroke-width="0.32">15</text>
<path d="M241.4 467 V479.3" stroke="#40409c" stroke-width="1.25" fill="none" stroke-linejoin="miter" />
<circle cx="241.4" cy="495.5" r="16.2" stroke="#40409c" stroke-width="1.25" fill="none"/>
<path d="M236.70000000000002 486.3 H246.1 M241.4 482.54 V490.06" stroke="#40409c" stroke-width="1.25" fill="none" stroke-linejoin="miter" />
<path d="M236.70000000000002 505.7 H246.1" stroke="#40409c" stroke-width="1.25" fill="none" stroke-linejoin="miter" />
<path d="M241.4 511.7 V524.5" stroke="#40409c" stroke-width="1.25" fill="none" stroke-linejoin="miter" />
<path d="M232.4 524.5 H250.4 L241.4 534.0 Z" stroke="#40409c" stroke-width="1.25" fill="none" stroke-linejoin="miter" />
<text x="253.85000000000002" y="480.5" font-size="10.0" font-weight="bold" fill="#111" text-anchor="start" textLength="13.3" lengthAdjust="spacingAndGlyphs" stroke="#111" stroke-width="0.32">V2</text>
<text x="253.9" y="520.7" font-size="10.0" font-weight="bold" fill="#111" text-anchor="start" textLength="17.6" lengthAdjust="spacingAndGlyphs" stroke="#111" stroke-width="0.32">-15</text>
<text transform="translate(189.20,457.8) rotate(-90)" font-size="10.97" font-weight="bold" fill="#111" textLength="6.8" lengthAdjust="spacingAndGlyphs">V</text>
<path d="M181.70000000000002 462.6 H188.9 M185.3 459.6 V465.6" stroke="#111" stroke-width="1.5" fill="none" stroke-linejoin="miter" />
<text transform="translate(245.20,462) rotate(-90)" font-size="10.97" font-weight="bold" fill="#111" textLength="7.0" lengthAdjust="spacingAndGlyphs">V</text>
<path d="M241.4 463.2 V466.6" stroke="#111" stroke-width="1.6" fill="none" stroke-linejoin="miter" />
<path d="M426.7 410.1 V428.7 L418.2 419.3 Z" stroke="#40409c" stroke-width="1.25" fill="none" stroke-linejoin="miter" />
<path d="M426.7 410.1 V428.7" stroke="#40409c" stroke-width="1.8" fill="none" stroke-linejoin="miter" />
<path d="M426.7 419.3 H439 L443.3 411.4 L451.3 427.1 L459.2 411.4 L467.1 427.1 L472.1 419.3 H495.2 L499.3 411.4 L507.2 427.1 L515.1 411.4 L523 427.1 L528 419.3 H539.5 V476.2" stroke="#40409c" stroke-width="1.25" fill="none" stroke-linejoin="miter" />
<rect x="481.0" y="416.8" width="5.0" height="5.0" fill="#0000e0" />
<path d="M483.5 419.3 V467.2 H491.4" stroke="#40409c" stroke-width="1.25" fill="none" stroke-linejoin="miter" />
<path d="M491.4 459.6 V492.4 L523.8 476.1 Z" stroke="#40409c" stroke-width="1.25" fill="none" stroke-linejoin="miter" />
<path d="M523.8 476.2 H624 L628 468 L636.9 484 L644.9 468 L653.7 484 L657.7 476.3 H766 V499.4 H795 Q799 499.4 800.2 503" stroke="#40409c" stroke-width="1.25" fill="none" stroke-linejoin="miter" />
<rect x="537.0" y="473.7" width="5.0" height="5.0" fill="#0000e0" />
<path d="M508 458.3 V467.9" stroke="#40409c" stroke-width="1.25" fill="none" stroke-linejoin="miter" />
<path d="M508 483.7 V492.3" stroke="#40409c" stroke-width="1.25" fill="none" stroke-linejoin="miter" />
<text transform="translate(512.30,450.4) rotate(-90)" font-size="10.70" font-weight="bold" fill="#111" textLength="7.1" lengthAdjust="spacingAndGlyphs">V</text>
<path d="M504.8 454.6 H511.8 M508.3 451.70000000000005 V457.5" stroke="#111" stroke-width="1.5" fill="none" stroke-linejoin="miter" />
<text transform="translate(512.10,499.7) rotate(-90)" font-size="10.70" font-weight="bold" fill="#111" textLength="7.2" lengthAdjust="spacingAndGlyphs">V</text>
<path d="M508.2 500.6 V504.4" stroke="#111" stroke-width="1.6" fill="none" stroke-linejoin="miter" />
<path d="M493.4 467.2 H498.0" stroke="#40409c" stroke-width="0.9" fill="none" stroke-linejoin="miter" />
<path d="M492.9 484 H497.5 M495.2 482.16 V485.84" stroke="#40409c" stroke-width="0.9" fill="none" stroke-linejoin="miter" />
<path d="M509.7 465.6 H514.3 M512 463.76000000000005 V467.44" stroke="#40409c" stroke-width="0.9" fill="none" stroke-linejoin="miter" />
<path d="M509.5 486.2 H514.1" stroke="#40409c" stroke-width="0.9" fill="none" stroke-linejoin="miter" />
<text x="447.95" y="408.5" font-size="10.0" font-weight="bold" fill="#111" text-anchor="start" textLength="13.3" lengthAdjust="spacingAndGlyphs" stroke="#111" stroke-width="0.32">R1</text>
<text x="443.84999999999997" y="437.9" font-size="10.0" font-weight="bold" fill="#111" text-anchor="start" textLength="22.8" lengthAdjust="spacingAndGlyphs" stroke="#111" stroke-width="0.32">1.1k</text>
<text x="504.65" y="408.5" font-size="10.0" font-weight="bold" fill="#111" text-anchor="start" textLength="13.9" lengthAdjust="spacingAndGlyphs" stroke="#111" stroke-width="0.32">R2</text>
<text x="502.45" y="437.9" font-size="10.0" font-weight="bold" fill="#111" text-anchor="start" textLength="19.6" lengthAdjust="spacingAndGlyphs" stroke="#111" stroke-width="0.32">10k</text>
<text x="515.9499999999999" y="463.8" font-size="10.0" font-weight="bold" fill="#111" text-anchor="start" textLength="14.6" lengthAdjust="spacingAndGlyphs" stroke="#111" stroke-width="0.32">U1</text>
<text x="515.9499999999999" y="496.5" font-size="10.0" font-weight="bold" fill="#111" text-anchor="start" textLength="52.6" lengthAdjust="spacingAndGlyphs" stroke="#111" stroke-width="0.32">ADA4077</text>
<path d="M491.4 484 H435 V495.5" stroke="#40409c" stroke-width="1.25" fill="none" stroke-linejoin="miter" />
<circle cx="434.6" cy="511.7" r="16.2" stroke="#40409c" stroke-width="1.25" fill="none"/>
<path d="M429.90000000000003 502.5 H439.3 M434.6 498.74 V506.26" stroke="#40409c" stroke-width="1.25" fill="none" stroke-linejoin="miter" />
<path d="M429.90000000000003 521.9 H439.3" stroke="#40409c" stroke-width="1.25" fill="none" stroke-linejoin="miter" />
<path d="M434.6 527.9 V540" stroke="#40409c" stroke-width="1.25" fill="none" stroke-linejoin="miter" />
<path d="M425.6 540 H443.6 L434.6 549.5 Z" stroke="#40409c" stroke-width="1.25" fill="none" stroke-linejoin="miter" />
<text x="430.15" y="481.3" font-size="10.0" font-weight="bold" fill="#111" text-anchor="start" textLength="9.7" lengthAdjust="spacingAndGlyphs" stroke="#111" stroke-width="0.32">in</text>
<text x="454.15" y="498" font-size="10.0" font-weight="bold" fill="#111" text-anchor="start" textLength="16.7" lengthAdjust="spacingAndGlyphs" stroke="#111" stroke-width="0.32">Vin</text>
<text x="454.15" y="511.7" font-size="10.0" font-weight="bold" fill="#111" text-anchor="start" textLength="24.7" lengthAdjust="spacingAndGlyphs" stroke="#111" stroke-width="0.32">AC 1</text>
<text x="455.04999999999995" y="536.3" font-size="10.0" font-weight="bold" fill="#111" text-anchor="start" textLength="80.6" lengthAdjust="spacingAndGlyphs" stroke="#111" stroke-width="0.32">SINE(0 1 10K)</text>
<text x="633.05" y="464" font-size="10.0" font-weight="bold" fill="#111" text-anchor="start" textLength="14.1" lengthAdjust="spacingAndGlyphs" stroke="#111" stroke-width="0.32">R3</text>
<text x="628.15" y="495.3" font-size="10.0" font-weight="bold" fill="#111" text-anchor="start" textLength="23.7" lengthAdjust="spacingAndGlyphs" stroke="#111" stroke-width="0.32">1.6k</text>
<rect x="691.0" y="473.8" width="5.0" height="5.0" fill="#0000e0" />
<path d="M693.5 476.3 V505.4 M693.5 509.7 V532" stroke="#40409c" stroke-width="1.25" fill="none" stroke-linejoin="miter" />
<path d="M684.2 505.4 H701.8 M684.2 509.7 H701.8" stroke="#505080" stroke-width="1.8" fill="none" stroke-linejoin="miter" />
<path d="M684.3 532 H702.3 L693.3 541.5 Z" stroke="#40409c" stroke-width="1.25" fill="none" stroke-linejoin="miter" />
<text x="697.9499999999999" y="500" font-size="10.0" font-weight="bold" fill="#111" text-anchor="start" textLength="12.5" lengthAdjust="spacingAndGlyphs" stroke="#111" stroke-width="0.32">C1</text>
<text x="697.9499999999999" y="525" font-size="10.0" font-weight="bold" fill="#111" text-anchor="start" textLength="19.9" lengthAdjust="spacingAndGlyphs" stroke="#111" stroke-width="0.32">10n</text>
<rect x="741.5" y="427.4" width="323.3" height="233.3" fill="none" stroke="#3a3a80" stroke-width="1" stroke-dasharray="1.7 2.3"/>
<text x="745.85" y="439.6" font-size="10.6" font-weight="bold" fill="#0000b4" text-anchor="start" textLength="217.3" lengthAdjust="spacingAndGlyphs" stroke="#0000b4" stroke-width="0.32">Alternative RTI Noise Simulation Block</text>
<circle cx="814" cy="511.3" r="16" stroke="#40409c" stroke-width="1.25" fill="none"/>
<path d="M766 524.2 H795 Q799 524.2 800.2 520.6" stroke="#40409c" stroke-width="1.25" fill="none" stroke-linejoin="miter" />
<path d="M766 524.2 V555.8" stroke="#40409c" stroke-width="1.25" fill="none" stroke-linejoin="miter" />
<path d="M757 555.8 H775 L766 565.3 Z" stroke="#40409c" stroke-width="1.25" fill="none" stroke-linejoin="miter" />
<path d="M814 495.3 V476.4 H943.6 V499.6 H948 Q952 499.6 953.4 503" stroke="#40409c" stroke-width="1.25" fill="none" stroke-linejoin="miter" />
<path d="M814 527.3 V568.1" stroke="#40409c" stroke-width="1.25" fill="none" stroke-linejoin="miter" />
<path d="M811.4 504 H816.6 M814 501.92 V506.08" stroke="#40409c" stroke-width="0.9" fill="none" stroke-linejoin="miter" />
<path d="M811.4 520 H816.6" stroke="#40409c" stroke-width="0.9" fill="none" stroke-linejoin="miter" />
<path d="M789.1 504 H794.3000000000001 M791.7 501.92 V506.08" stroke="#40409c" stroke-width="0.9" fill="none" stroke-linejoin="miter" />
<path d="M789.1 520 H794.3000000000001" stroke="#40409c" stroke-width="0.9" fill="none" stroke-linejoin="miter" />
<text x="826.35" y="496.7" font-size="10.0" font-weight="bold" fill="#111" text-anchor="start" textLength="12.5" lengthAdjust="spacingAndGlyphs" stroke="#111" stroke-width="0.32">E1</text>
<text x="847.9499999999999" y="472.7" font-size="10.0" font-weight="bold" fill="#111" text-anchor="start" textLength="11.7" lengthAdjust="spacingAndGlyphs" stroke="#111" stroke-width="0.32">rti</text>
<text x="826.25" y="536.1" font-size="10.0" font-weight="bold" fill="#111" text-anchor="start" textLength="93.0" lengthAdjust="spacingAndGlyphs" stroke="#111" stroke-width="0.32">{1/signal_gain}</text>
<circle cx="813.9" cy="584.1" r="16" stroke="#40409c" stroke-width="1.25" fill="none"/>
<path d="M809.3 575 H818.7 M814 571.24 V578.76" stroke="#40409c" stroke-width="1.25" fill="none" stroke-linejoin="miter" />
<path d="M809.3 594.5 H818.7" stroke="#40409c" stroke-width="1.25" fill="none" stroke-linejoin="miter" />
<path d="M813.9 600.1 V628" stroke="#40409c" stroke-width="1.25" fill="none" stroke-linejoin="miter" />
<path d="M804.6999999999999 628 H823.1 L813.9 638.5 Z" stroke="#40409c" stroke-width="1.25" fill="none" stroke-linejoin="miter" />
<text x="826.25" y="568.6" font-size="10.0" font-weight="bold" fill="#111" text-anchor="start" textLength="18.8" lengthAdjust="spacingAndGlyphs" stroke="#111" stroke-width="0.32">Vrti</text>
<text x="826.65" y="609.8" font-size="10.0" font-weight="bold" fill="#111" text-anchor="start" textLength="5.7" lengthAdjust="spacingAndGlyphs" stroke="#111" stroke-width="0.32">0</text>
<text x="829.9499999999999" y="648.3" font-size="10.0" font-weight="bold" fill="#111" text-anchor="start" textLength="137.2" lengthAdjust="spacingAndGlyphs" stroke="#111" stroke-width="0.32">.param signal_gain = 10</text>
<circle cx="967.4" cy="511.5" r="16.2" stroke="#40409c" stroke-width="1.25" fill="none"/>
<path d="M967.4 495.3 V476.4 H1072" stroke="#40409c" stroke-width="1.25" fill="none" stroke-linejoin="miter" />
<path d="M927.2 524.5 H948.5 Q952.5 524.5 953.6 520.8 M927.2 524.5 V556.7" stroke="#40409c" stroke-width="1.25" fill="none" stroke-linejoin="miter" />
<path d="M918.2 556.7 H936.2 L927.2 566.2 Z" stroke="#40409c" stroke-width="1.25" fill="none" stroke-linejoin="miter" />
<path d="M967.4 527.7 V556.7" stroke="#40409c" stroke-width="1.25" fill="none" stroke-linejoin="miter" />
<path d="M958.4 556.7 H976.4 L967.4 566.2 Z" stroke="#40409c" stroke-width="1.25" fill="none" stroke-linejoin="miter" />
<path d="M964.4 503.8 H969.6 M967 501.72 V505.88" stroke="#40409c" stroke-width="0.9" fill="none" stroke-linejoin="miter" />
<path d="M964.4 520.2 H969.6" stroke="#40409c" stroke-width="0.9" fill="none" stroke-linejoin="miter" />
<path d="M943.1999999999999 503.8 H948.4 M945.8 501.72 V505.88" stroke="#40409c" stroke-width="0.9" fill="none" stroke-linejoin="miter" />
<path d="M943.1999999999999 520.2 H948.4" stroke="#40409c" stroke-width="0.9" fill="none" stroke-linejoin="miter" />
<text x="979.85" y="496.5" font-size="10.0" font-weight="bold" fill="#111" text-anchor="start" textLength="13.9" lengthAdjust="spacingAndGlyphs" stroke="#111" stroke-width="0.32">E2</text>
<text x="979.85" y="536.6" font-size="10.0" font-weight="bold" fill="#111" text-anchor="start" textLength="79.5" lengthAdjust="spacingAndGlyphs" stroke="#111" stroke-width="0.32">{signal_gain}</text>
<text x="1072.75" y="481.2" font-size="10.0" font-weight="bold" fill="#111" text-anchor="start" textLength="18.3" lengthAdjust="spacingAndGlyphs" stroke="#111" stroke-width="0.32">out</text>
<text x="350.84999999999997" y="581" font-size="10.0" font-weight="bold" fill="#0000b4" text-anchor="start" textLength="273.2" lengthAdjust="spacingAndGlyphs" stroke="#0000b4" stroke-width="0.32">Note: set Vrti as input source in noise simulation</text>
<text x="411.15" y="600.3" font-size="10.0" font-weight="bold" fill="#111" text-anchor="start" textLength="191.5" lengthAdjust="spacingAndGlyphs" stroke="#111" stroke-width="0.32">.noise V(out) Vrti dec 100 0.1 10G</text>
</svg></body></html>
